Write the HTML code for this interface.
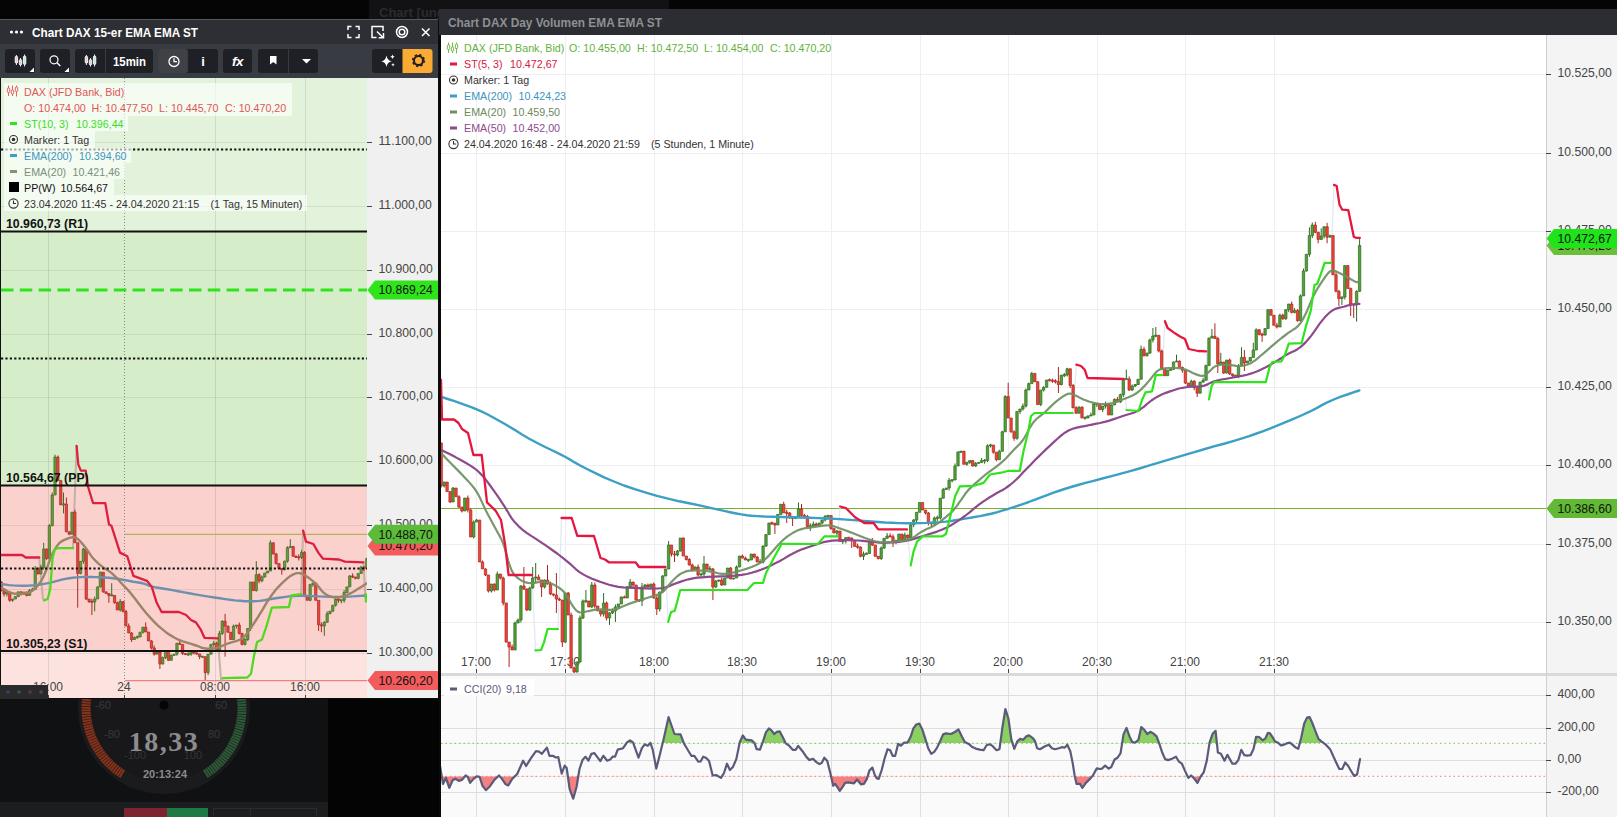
<!DOCTYPE html><html><head><meta charset="utf-8"><title>Chart</title><style>html,body{margin:0;padding:0;background:#050506;}body{width:1617px;height:817px;overflow:hidden;position:relative;font-family:"Liberation Sans",sans-serif;}svg{position:absolute;left:0;top:0;display:block}text{font-family:"Liberation Sans",sans-serif;}</style></head><body>
<svg width="1617" height="817" viewBox="0 0 1617 817">
<rect x="0" y="0" width="1617" height="817" fill="#050506" />
<rect x="369" y="0" width="300" height="19" fill="#121214" />
<text x="379" y="17" font-size="13" fill="#2b2b2e" font-weight="bold" text-anchor="start" >Chart [ung</text>
<rect x="439" y="9" width="1178" height="26" fill="#2b2d32" />
<text x="448" y="27" font-size="13" fill="#8d9094" font-weight="bold" text-anchor="start" textLength="214" lengthAdjust="spacingAndGlyphs">Chart DAX Day Volumen EMA EMA ST</text>
<rect x="439" y="35" width="2.5" height="782" fill="#0a0a0b" />
<rect x="441" y="35" width="1105" height="638" fill="#ffffff" />
<rect x="1546" y="35" width="71" height="782" fill="#f4f4f4" />
<rect x="441" y="676" width="1105" height="141" fill="#fafafa" />
<g shape-rendering="crispEdges">
<line x1="476.5" y1="35" x2="476.5" y2="673" stroke="#efeff1" stroke-width="1" />
<line x1="565.5" y1="35" x2="565.5" y2="673" stroke="#efeff1" stroke-width="1" />
<line x1="654.5" y1="35" x2="654.5" y2="673" stroke="#efeff1" stroke-width="1" />
<line x1="742.5" y1="35" x2="742.5" y2="673" stroke="#efeff1" stroke-width="1" />
<line x1="831.5" y1="35" x2="831.5" y2="673" stroke="#efeff1" stroke-width="1" />
<line x1="920.5" y1="35" x2="920.5" y2="673" stroke="#efeff1" stroke-width="1" />
<line x1="1008.5" y1="35" x2="1008.5" y2="673" stroke="#efeff1" stroke-width="1" />
<line x1="1097.5" y1="35" x2="1097.5" y2="673" stroke="#efeff1" stroke-width="1" />
<line x1="1185.5" y1="35" x2="1185.5" y2="673" stroke="#efeff1" stroke-width="1" />
<line x1="1274.5" y1="35" x2="1274.5" y2="673" stroke="#efeff1" stroke-width="1" />
<line x1="441" y1="74.5" x2="1546" y2="74.5" stroke="#efeff1" stroke-width="1" />
<line x1="441" y1="153.5" x2="1546" y2="153.5" stroke="#efeff1" stroke-width="1" />
<line x1="441" y1="231.5" x2="1546" y2="231.5" stroke="#efeff1" stroke-width="1" />
<line x1="441" y1="309.5" x2="1546" y2="309.5" stroke="#efeff1" stroke-width="1" />
<line x1="441" y1="387.5" x2="1546" y2="387.5" stroke="#efeff1" stroke-width="1" />
<line x1="441" y1="465.5" x2="1546" y2="465.5" stroke="#efeff1" stroke-width="1" />
<line x1="441" y1="544.5" x2="1546" y2="544.5" stroke="#efeff1" stroke-width="1" />
<line x1="441" y1="622.5" x2="1546" y2="622.5" stroke="#efeff1" stroke-width="1" />
<line x1="476.5" y1="676" x2="476.5" y2="817" stroke="#dedee0" stroke-width="1" />
<line x1="565.5" y1="676" x2="565.5" y2="817" stroke="#dedee0" stroke-width="1" />
<line x1="654.5" y1="676" x2="654.5" y2="817" stroke="#dedee0" stroke-width="1" />
<line x1="742.5" y1="676" x2="742.5" y2="817" stroke="#dedee0" stroke-width="1" />
<line x1="831.5" y1="676" x2="831.5" y2="817" stroke="#dedee0" stroke-width="1" />
<line x1="920.5" y1="676" x2="920.5" y2="817" stroke="#dedee0" stroke-width="1" />
<line x1="1008.5" y1="676" x2="1008.5" y2="817" stroke="#dedee0" stroke-width="1" />
<line x1="1097.5" y1="676" x2="1097.5" y2="817" stroke="#dedee0" stroke-width="1" />
<line x1="1185.5" y1="676" x2="1185.5" y2="817" stroke="#dedee0" stroke-width="1" />
<line x1="1274.5" y1="676" x2="1274.5" y2="817" stroke="#dedee0" stroke-width="1" />
<line x1="441" y1="695.5" x2="1546" y2="695.5" stroke="#dedee0" stroke-width="1" />
<line x1="441" y1="728.5" x2="1546" y2="728.5" stroke="#dedee0" stroke-width="1" />
<line x1="441" y1="760.5" x2="1546" y2="760.5" stroke="#dedee0" stroke-width="1" />
<line x1="441" y1="792.5" x2="1546" y2="792.5" stroke="#dedee0" stroke-width="1" />
<rect x="441" y="673" width="1176" height="3" fill="#d9d9db" />
<line x1="1546.5" y1="35" x2="1546.5" y2="817" stroke="#cfcfd1" stroke-width="1" />
</g>
<line x1="1546" y1="74.5" x2="1551" y2="74.5" stroke="#444" stroke-width="1" />
<text x="1557.5" y="77.3" font-size="12.2" fill="#444" font-weight="normal" text-anchor="start" >10.525,00</text>
<line x1="1546" y1="153.5" x2="1551" y2="153.5" stroke="#444" stroke-width="1" />
<text x="1557.5" y="156.3" font-size="12.2" fill="#444" font-weight="normal" text-anchor="start" >10.500,00</text>
<line x1="1546" y1="231.5" x2="1551" y2="231.5" stroke="#444" stroke-width="1" />
<text x="1557.5" y="234.3" font-size="12.2" fill="#444" font-weight="normal" text-anchor="start" >10.475,00</text>
<line x1="1546" y1="309.5" x2="1551" y2="309.5" stroke="#444" stroke-width="1" />
<text x="1557.5" y="312.3" font-size="12.2" fill="#444" font-weight="normal" text-anchor="start" >10.450,00</text>
<line x1="1546" y1="387.5" x2="1551" y2="387.5" stroke="#444" stroke-width="1" />
<text x="1557.5" y="390.3" font-size="12.2" fill="#444" font-weight="normal" text-anchor="start" >10.425,00</text>
<line x1="1546" y1="465.5" x2="1551" y2="465.5" stroke="#444" stroke-width="1" />
<text x="1557.5" y="468.3" font-size="12.2" fill="#444" font-weight="normal" text-anchor="start" >10.400,00</text>
<line x1="1546" y1="544.5" x2="1551" y2="544.5" stroke="#444" stroke-width="1" />
<text x="1557.5" y="547.3" font-size="12.2" fill="#444" font-weight="normal" text-anchor="start" >10.375,00</text>
<line x1="1546" y1="622.5" x2="1551" y2="622.5" stroke="#444" stroke-width="1" />
<text x="1557.5" y="625.3" font-size="12.2" fill="#444" font-weight="normal" text-anchor="start" >10.350,00</text>
<line x1="1546" y1="695.5" x2="1551" y2="695.5" stroke="#444" stroke-width="1" />
<text x="1557.5" y="698.3" font-size="12.2" fill="#444" font-weight="normal" text-anchor="start" >400,00</text>
<line x1="1546" y1="728.5" x2="1551" y2="728.5" stroke="#444" stroke-width="1" />
<text x="1557.5" y="731.3" font-size="12.2" fill="#444" font-weight="normal" text-anchor="start" >200,00</text>
<line x1="1546" y1="760.5" x2="1551" y2="760.5" stroke="#444" stroke-width="1" />
<text x="1557.5" y="763.3" font-size="12.2" fill="#444" font-weight="normal" text-anchor="start" >0,00</text>
<line x1="1546" y1="792.5" x2="1551" y2="792.5" stroke="#444" stroke-width="1" />
<text x="1557.5" y="795.3" font-size="12.2" fill="#444" font-weight="normal" text-anchor="start" >-200,00</text>
<text x="476" y="666" font-size="12" fill="#444" font-weight="normal" text-anchor="middle" >17:00</text>
<line x1="476.5" y1="669" x2="476.5" y2="673" stroke="#444" stroke-width="1" />
<text x="565" y="666" font-size="12" fill="#444" font-weight="normal" text-anchor="middle" >17:30</text>
<line x1="565.5" y1="669" x2="565.5" y2="673" stroke="#444" stroke-width="1" />
<text x="654" y="666" font-size="12" fill="#444" font-weight="normal" text-anchor="middle" >18:00</text>
<line x1="654.5" y1="669" x2="654.5" y2="673" stroke="#444" stroke-width="1" />
<text x="742" y="666" font-size="12" fill="#444" font-weight="normal" text-anchor="middle" >18:30</text>
<line x1="742.5" y1="669" x2="742.5" y2="673" stroke="#444" stroke-width="1" />
<text x="831" y="666" font-size="12" fill="#444" font-weight="normal" text-anchor="middle" >19:00</text>
<line x1="831.5" y1="669" x2="831.5" y2="673" stroke="#444" stroke-width="1" />
<text x="920" y="666" font-size="12" fill="#444" font-weight="normal" text-anchor="middle" >19:30</text>
<line x1="920.5" y1="669" x2="920.5" y2="673" stroke="#444" stroke-width="1" />
<text x="1008" y="666" font-size="12" fill="#444" font-weight="normal" text-anchor="middle" >20:00</text>
<line x1="1008.5" y1="669" x2="1008.5" y2="673" stroke="#444" stroke-width="1" />
<text x="1097" y="666" font-size="12" fill="#444" font-weight="normal" text-anchor="middle" >20:30</text>
<line x1="1097.5" y1="669" x2="1097.5" y2="673" stroke="#444" stroke-width="1" />
<text x="1185" y="666" font-size="12" fill="#444" font-weight="normal" text-anchor="middle" >21:00</text>
<line x1="1185.5" y1="669" x2="1185.5" y2="673" stroke="#444" stroke-width="1" />
<text x="1274" y="666" font-size="12" fill="#444" font-weight="normal" text-anchor="middle" >21:30</text>
<line x1="1274.5" y1="669" x2="1274.5" y2="673" stroke="#444" stroke-width="1" />
<clipPath id="cm"><rect x="441" y="35" width="1105" height="638"/></clipPath>
<g clip-path="url(#cm)">
<line x1="441" y1="508.5" x2="1546" y2="508.5" stroke="#78b030" stroke-width="1.2" />
<polyline points="532.0,575.0 535.5,650.4" fill="none" stroke="#dfe8f3" stroke-width="1.2" stroke-linejoin="round" stroke-linecap="round" />
<polyline points="558.0,629.0 561.5,518.0" fill="none" stroke="#dfe8f3" stroke-width="1.2" stroke-linejoin="round" stroke-linecap="round" />
<polyline points="665.4,567.0 668.2,622.0" fill="none" stroke="#dfe8f3" stroke-width="1.2" stroke-linejoin="round" stroke-linecap="round" />
<polyline points="837.4,536.4 840.2,506.5" fill="none" stroke="#dfe8f3" stroke-width="1.2" stroke-linejoin="round" stroke-linecap="round" />
<polyline points="907.0,529.4 910.7,565.5" fill="none" stroke="#dfe8f3" stroke-width="1.2" stroke-linejoin="round" stroke-linecap="round" />
<polyline points="1072.7,413.0 1076.4,364.7" fill="none" stroke="#dfe8f3" stroke-width="1.2" stroke-linejoin="round" stroke-linecap="round" />
<polyline points="1123.7,379.0 1126.5,410.0" fill="none" stroke="#dfe8f3" stroke-width="1.2" stroke-linejoin="round" stroke-linecap="round" />
<polyline points="1162.0,375.2 1164.9,321.2" fill="none" stroke="#dfe8f3" stroke-width="1.2" stroke-linejoin="round" stroke-linecap="round" />
<polyline points="1206.2,351.3 1209.0,399.4" fill="none" stroke="#dfe8f3" stroke-width="1.2" stroke-linejoin="round" stroke-linecap="round" />
<polyline points="1331.0,262.8 1334.0,184.9" fill="none" stroke="#dfe8f3" stroke-width="1.2" stroke-linejoin="round" stroke-linecap="round" />
<path d="M444.2 482.0V487.5M453.0 487.0V502.0M464.8 498.0V511.0M473.7 520.5V538.5M476.6 519.0V522.0M491.4 584.0V592.5M497.3 571.5V590.0M515.0 621.5V650.0M518.0 618.5V623.0M520.9 585.0V622.5M529.8 586.5V611.0M532.7 567.0V588.5M535.7 563.0V583.0M544.6 579.5V588.5M565.2 593.0V643.0M577.0 661.5V672.5M580.0 615.5V662.5M582.9 599.5V619.0M585.9 590.0V603.0M591.8 582.0V608.0M603.6 593.0V616.5M609.5 612.0V625.0M612.5 608.5V614.0M615.4 604.5V622.0M618.4 604.0V608.0M621.3 596.5V604.0M627.2 586.0V598.0M630.2 579.0V587.5M642.0 583.0V606.0M645.0 584.0V588.0M650.9 584.0V588.0M659.7 591.5V611.5M662.7 575.0V592.0M665.6 569.0V576.0M668.6 541.0V569.0M677.4 550.0V556.5M680.4 538.0V551.5M695.2 566.5V570.0M701.1 572.5V577.5M704.0 556.0V576.5M709.9 565.9V571.1M715.8 580.0V588.0M718.8 580.0V582.0M724.7 578.0V585.0M727.6 568.0V578.0M733.5 578.0V579.5M736.5 565.5V578.0M739.5 556.0V567.0M748.3 558.9V562.1M751.3 554.0V560.0M760.1 558.9V563.1M763.1 545.5V563.5M766.0 534.1V547.0M769.0 523.0V534.6M777.8 514.0V525.0M780.8 504.3V514.5M795.6 517.0V518.6M798.5 502.5V517.5M810.3 523.2V531.0M813.3 521.5V526.5M819.2 523.0V526.2M822.1 520.0V524.5M825.1 514.9V521.5M828.0 514.9V519.1M836.9 530.0V535.5M842.8 539.1V544.0M845.8 537.2V543.5M863.5 551.5V560.0M866.4 552.6V554.4M869.4 541.4V553.5M881.2 546.5V560.0M884.1 538.3V549.0M887.1 533.0V538.8M896.0 539.6V544.3M898.9 534.0V542.0M904.8 532.5V540.1M910.7 523.7V538.7M913.7 519.0V527.2M916.6 512.3V522.5M919.6 502.5V512.3M934.4 516.5V525.0M937.3 515.5V521.0M940.3 498.2V519.5M943.2 488.0V498.2M946.2 488.0V489.5M949.1 477.9V490.5M952.1 479.6V482.3M955.0 463.5V480.0M958.0 451.2V466.0M960.9 451.1V452.4M966.8 461.9V465.8M969.8 460.6V463.9M975.7 461.9V467.0M978.6 462.4V463.4M981.6 458.1V462.9M984.6 459.0V463.7M987.5 444.3V462.1M990.5 443.8V447.5M999.3 449.8V459.7M1002.3 430.8V451.3M1005.2 395.1V431.8M1017.0 411.4V439.8M1020.0 409.0V414.0M1022.9 403.5V410.5M1025.9 388.5V407.5M1028.8 382.6V390.0M1031.8 371.9V383.6M1040.7 390.0V406.1M1043.6 386.3V391.5M1046.6 380.0V387.3M1061.3 374.8V385.5M1064.3 373.0V377.2M1067.2 367.8V376.5M1079.0 406.2V413.3M1085.0 416.4V419.6M1087.9 415.5V418.0M1090.9 412.5V416.0M1093.8 403.0V415.0M1096.8 403.4V407.1M1102.7 406.0V412.1M1105.6 401.5V408.5M1111.5 404.5V415.0M1114.5 398.4V405.0M1120.4 393.7V403.0M1123.3 379.0V397.2M1126.3 369.7V379.6M1132.2 384.5V391.0M1135.2 384.0V387.0M1138.1 379.3V385.0M1141.1 345.5V379.3M1147.0 353.0V356.3M1149.9 338.5V354.0M1152.9 328.0V342.5M1155.8 327.0V337.3M1167.6 370.2V375.7M1170.6 369.1V370.4M1173.5 361.5V369.8M1176.5 354.6V362.0M1191.3 379.7V387.3M1200.1 381.7V393.2M1203.1 377.8V382.2M1206.0 364.6V380.3M1209.0 337.6V365.6M1211.9 329.0V338.1M1220.8 352.8V364.3M1226.7 360.0V373.5M1235.6 375.1V376.3M1238.5 364.1V378.2M1241.5 347.3V365.6M1247.4 361.0V363.0M1250.3 357.4V361.5M1253.3 342.7V357.9M1256.2 328.3V350.0M1265.1 328.6V335.5M1268.0 309.2V328.6M1279.9 313.7V327.0M1285.8 309.7V319.8M1288.7 304.0V312.2M1294.6 308.1V313.4M1300.5 294.4V321.2M1303.5 268.5V295.9M1306.4 254.3V271.5M1309.4 227.3V256.8M1312.3 222.5V238.1M1321.2 228.4V239.4M1324.1 226.7V238.5M1330.1 234.6V237.2M1341.9 296.5V305.0M1344.8 265.6V299.5M1356.6 290.3V321.6M1359.6 238.3V291.8" stroke="#2e6b20" stroke-width="1" fill="none"/>
<path d="M441.2 442.5V487.5M447.1 482.0V491.6M450.1 491.6V503.0M456.0 488.0V496.7M458.9 495.2V508.0M461.9 507.0V512.5M467.8 495.5V512.5M470.7 508.5V537.0M479.6 520.0V562.0M482.5 560.5V568.9M485.5 568.4V576.0M488.4 575.0V592.5M494.4 583.5V591.5M500.3 574.0V579.5M503.2 576.5V605.5M506.2 603.0V642.5M509.1 642.0V667.0M512.1 644.5V650.0M523.9 567.0V590.0M526.8 588.5V611.0M538.6 574.5V580.0M541.6 580.0V597.0M547.5 565.0V584.5M550.5 581.5V595.0M553.4 593.5V596.5M556.4 573.0V613.0M559.3 597.5V601.0M562.3 600.0V647.0M568.2 592.0V615.0M571.1 612.5V668.0M574.1 666.5V673.5M588.9 601.0V607.0M594.8 582.5V608.5M597.7 606.0V611.0M600.7 608.5V616.5M606.6 601.5V620.5M624.3 595.5V598.0M633.1 582.0V587.5M636.1 585.0V601.0M639.1 599.0V602.0M647.9 583.5V587.5M653.8 582.5V598.5M656.8 595.5V615.0M671.5 545.0V556.5M674.5 551.0V562.0M683.3 537.5V556.0M686.3 556.0V560.5M689.3 558.0V565.5M692.2 563.5V571.5M698.1 564.5V576.5M707.0 564.0V570.0M712.9 568.0V600.0M721.7 577.5V586.0M730.6 567.0V579.0M742.4 554.5V558.1M745.4 556.6V560.0M754.2 554.0V558.5M757.2 556.0V562.0M771.9 521.6V524.9M774.9 522.5V534.0M783.7 501.8V513.2M786.7 509.8V523.0M789.7 512.0V518.9M792.6 516.4V526.0M801.5 504.0V518.0M804.4 513.9V516.6M807.4 514.9V527.1M816.2 522.5V526.2M831.0 515.5V529.9M833.9 528.4V533.0M839.9 531.0V541.4M848.7 537.2V538.5M851.7 537.5V548.0M854.6 540.0V546.4M857.6 543.6V548.8M860.5 546.5V557.3M872.3 538.0V546.0M875.3 545.0V556.8M878.2 556.3V559.5M890.1 533.3V537.0M893.0 534.3V547.0M901.9 534.0V540.6M907.8 535.0V540.2M922.5 502.5V510.0M925.5 510.0V514.5M928.4 512.0V525.5M931.4 523.0V527.5M963.9 450.8V464.3M972.7 460.1V466.5M993.4 445.0V453.7M996.4 452.2V461.2M1008.2 382.7V418.0M1011.1 418.0V432.8M1014.1 430.3V440.8M1034.8 373.4V381.7M1037.7 381.2V404.6M1049.5 378.6V381.3M1052.5 378.6V382.8M1055.4 379.2V383.5M1058.4 367.0V393.0M1070.2 368.8V388.0M1073.1 384.0V408.2M1076.1 406.2V413.3M1082.0 406.2V418.0M1099.7 403.5V409.6M1108.6 403.5V415.0M1117.4 396.9V402.0M1129.2 376.5V391.0M1144.0 346.8V356.3M1158.8 334.9V352.5M1161.7 349.5V369.8M1164.7 367.8V375.7M1179.5 360.5V367.5M1182.4 366.5V372.7M1185.4 369.7V384.0M1188.3 383.0V387.3M1194.2 380.2V390.2M1197.2 387.2V397.0M1214.9 323.4V338.5M1217.8 337.0V373.0M1223.7 362.0V374.0M1229.7 358.5V375.0M1232.6 373.5V377.2M1244.4 350.0V371.0M1259.2 329.3V335.4M1262.1 332.6V341.8M1271.0 309.2V315.2M1273.9 315.2V325.3M1276.9 322.8V328.5M1282.8 313.7V319.8M1291.7 301.5V313.4M1297.6 309.1V321.7M1315.3 221.8V233.3M1318.2 231.8V243.3M1327.1 222.9V243.3M1333.0 235.6V274.8M1336.0 272.3V292.3M1338.9 289.8V306.0M1347.8 265.1V288.5M1350.7 287.5V316.0M1353.7 304.0V318.0" stroke="#ac261e" stroke-width="1" fill="none"/>
<path d="M443.0 482.0h2.4V486.0h-2.4zM451.8 488.0h2.4V502.0h-2.4zM463.6 498.0h2.4V511.0h-2.4zM472.5 522.0h2.4V537.0h-2.4zM475.4 520.0h2.4V522.0h-2.4zM490.2 584.0h2.4V591.0h-2.4zM496.1 574.0h2.4V590.0h-2.4zM513.8 623.0h2.4V650.0h-2.4zM516.8 620.0h2.4V623.0h-2.4zM519.7 586.0h2.4V620.0h-2.4zM528.6 588.0h2.4V610.0h-2.4zM531.5 578.0h2.4V588.0h-2.4zM534.5 577.0h2.4V578.0h-2.4zM543.4 580.0h2.4V587.0h-2.4zM564.0 593.0h2.4V642.0h-2.4zM575.8 662.0h2.4V672.0h-2.4zM578.8 618.0h2.4V662.0h-2.4zM581.7 601.0h2.4V618.0h-2.4zM584.7 600.4h2.4V601.6h-2.4zM590.6 585.0h2.4V607.0h-2.4zM602.4 603.0h2.4V614.0h-2.4zM608.3 613.0h2.4V618.0h-2.4zM611.3 611.0h2.4V613.0h-2.4zM614.2 607.0h2.4V611.0h-2.4zM617.2 604.0h2.4V607.0h-2.4zM620.1 597.0h2.4V604.0h-2.4zM626.0 587.0h2.4V598.0h-2.4zM629.0 582.0h2.4V587.0h-2.4zM640.8 587.0h2.4V601.0h-2.4zM643.8 585.0h2.4V587.0h-2.4zM649.7 584.0h2.4V587.0h-2.4zM658.5 592.0h2.4V609.0h-2.4zM661.5 576.0h2.4V592.0h-2.4zM664.4 569.0h2.4V576.0h-2.4zM667.4 545.0h2.4V569.0h-2.4zM676.2 551.0h2.4V555.0h-2.4zM679.2 538.0h2.4V551.0h-2.4zM694.0 567.0h2.4V570.0h-2.4zM699.9 574.0h2.4V575.0h-2.4zM702.8 564.0h2.4V574.0h-2.4zM708.7 568.4h2.4V569.6h-2.4zM714.6 581.0h2.4V587.0h-2.4zM717.6 580.0h2.4V581.0h-2.4zM723.5 578.0h2.4V585.0h-2.4zM726.4 568.0h2.4V578.0h-2.4zM732.3 578.0h2.4V579.0h-2.4zM735.3 567.0h2.4V578.0h-2.4zM738.3 556.0h2.4V567.0h-2.4zM747.1 559.4h2.4V560.6h-2.4zM750.1 554.0h2.4V560.0h-2.4zM758.9 561.4h2.4V562.6h-2.4zM761.9 546.0h2.4V562.0h-2.4zM764.8 534.6h2.4V546.0h-2.4zM767.8 523.0h2.4V534.6h-2.4zM776.6 514.5h2.4V525.0h-2.4zM779.6 504.3h2.4V514.5h-2.4zM794.4 517.0h2.4V518.6h-2.4zM797.3 509.0h2.4V517.0h-2.4zM809.1 525.7h2.4V526.9h-2.4zM812.1 524.0h2.4V526.0h-2.4zM818.0 523.0h2.4V525.7h-2.4zM820.9 520.0h2.4V523.0h-2.4zM823.9 516.4h2.4V520.0h-2.4zM826.8 515.4h2.4V516.6h-2.4zM835.7 531.0h2.4V533.0h-2.4zM841.6 540.6h2.4V541.8h-2.4zM844.6 537.7h2.4V541.0h-2.4zM862.3 554.0h2.4V556.3h-2.4zM865.2 553.1h2.4V554.4h-2.4zM868.2 541.4h2.4V553.5h-2.4zM880.0 548.0h2.4V558.5h-2.4zM882.9 538.3h2.4V548.0h-2.4zM885.9 536.0h2.4V538.3h-2.4zM894.8 540.6h2.4V541.8h-2.4zM897.7 534.0h2.4V541.0h-2.4zM903.6 535.0h2.4V539.6h-2.4zM909.5 524.7h2.4V537.7h-2.4zM912.5 520.0h2.4V524.7h-2.4zM915.4 512.3h2.4V520.0h-2.4zM918.4 502.5h2.4V512.3h-2.4zM933.2 518.0h2.4V524.0h-2.4zM936.1 517.4h2.4V518.6h-2.4zM939.1 498.2h2.4V518.0h-2.4zM942.0 489.5h2.4V498.2h-2.4zM945.0 488.0h2.4V489.5h-2.4zM947.9 480.4h2.4V488.0h-2.4zM950.9 479.6h2.4V480.8h-2.4zM953.8 466.0h2.4V480.0h-2.4zM956.8 452.2h2.4V466.0h-2.4zM959.7 451.1h2.4V452.4h-2.4zM965.6 462.4h2.4V464.3h-2.4zM968.6 460.6h2.4V462.4h-2.4zM974.5 463.4h2.4V466.0h-2.4zM977.4 462.4h2.4V463.4h-2.4zM980.4 460.6h2.4V462.4h-2.4zM983.4 460.0h2.4V461.2h-2.4zM986.3 445.8h2.4V460.6h-2.4zM989.3 444.8h2.4V446.0h-2.4zM998.1 451.3h2.4V459.7h-2.4zM1001.1 431.8h2.4V451.3h-2.4zM1004.0 396.6h2.4V431.8h-2.4zM1015.8 411.4h2.4V438.3h-2.4zM1018.8 409.0h2.4V411.4h-2.4zM1021.7 406.0h2.4V409.0h-2.4zM1024.7 390.0h2.4V406.0h-2.4zM1027.6 383.6h2.4V390.0h-2.4zM1030.6 373.4h2.4V383.6h-2.4zM1039.5 390.0h2.4V404.6h-2.4zM1042.4 387.3h2.4V390.0h-2.4zM1045.4 380.0h2.4V387.3h-2.4zM1060.1 375.3h2.4V384.5h-2.4zM1063.1 374.5h2.4V375.8h-2.4zM1066.0 368.8h2.4V375.0h-2.4zM1077.8 407.2h2.4V413.3h-2.4zM1083.8 417.4h2.4V418.6h-2.4zM1086.7 416.0h2.4V418.0h-2.4zM1089.7 415.0h2.4V416.0h-2.4zM1092.6 404.0h2.4V415.0h-2.4zM1095.6 403.4h2.4V404.6h-2.4zM1101.5 406.0h2.4V409.6h-2.4zM1104.4 404.0h2.4V406.0h-2.4zM1110.3 405.0h2.4V415.0h-2.4zM1113.3 399.4h2.4V405.0h-2.4zM1119.2 394.7h2.4V402.0h-2.4zM1122.1 379.0h2.4V394.7h-2.4zM1125.1 378.4h2.4V379.6h-2.4zM1131.0 386.0h2.4V390.0h-2.4zM1134.0 384.5h2.4V386.0h-2.4zM1136.9 379.3h2.4V384.5h-2.4zM1139.9 349.3h2.4V379.3h-2.4zM1145.8 353.0h2.4V355.8h-2.4zM1148.7 340.0h2.4V353.0h-2.4zM1151.7 336.0h2.4V340.0h-2.4zM1154.6 335.1h2.4V336.3h-2.4zM1166.4 370.2h2.4V375.7h-2.4zM1169.4 369.1h2.4V370.4h-2.4zM1172.3 362.0h2.4V369.3h-2.4zM1175.3 361.0h2.4V362.0h-2.4zM1190.1 381.2h2.4V385.8h-2.4zM1198.9 382.2h2.4V393.2h-2.4zM1201.9 380.3h2.4V382.2h-2.4zM1204.8 365.6h2.4V380.3h-2.4zM1207.8 338.1h2.4V365.6h-2.4zM1210.7 336.3h2.4V338.1h-2.4zM1219.6 362.0h2.4V363.8h-2.4zM1225.5 360.0h2.4V373.0h-2.4zM1234.4 375.1h2.4V376.3h-2.4zM1237.3 365.6h2.4V375.7h-2.4zM1240.3 357.4h2.4V365.6h-2.4zM1246.2 361.0h2.4V363.0h-2.4zM1249.1 357.4h2.4V361.0h-2.4zM1252.1 350.0h2.4V357.4h-2.4zM1255.0 329.8h2.4V350.0h-2.4zM1263.9 328.6h2.4V335.0h-2.4zM1266.8 309.7h2.4V328.6h-2.4zM1278.7 315.2h2.4V327.0h-2.4zM1284.6 309.7h2.4V318.8h-2.4zM1287.5 304.0h2.4V309.7h-2.4zM1293.4 310.6h2.4V312.4h-2.4zM1299.3 295.9h2.4V320.7h-2.4zM1302.3 271.0h2.4V295.9h-2.4zM1305.2 254.3h2.4V271.0h-2.4zM1308.2 235.6h2.4V254.3h-2.4zM1311.1 225.0h2.4V235.6h-2.4zM1320.0 236.0h2.4V239.4h-2.4zM1322.9 226.7h2.4V236.0h-2.4zM1328.9 235.6h2.4V237.2h-2.4zM1340.7 297.0h2.4V298.6h-2.4zM1343.6 265.6h2.4V297.0h-2.4zM1355.4 291.3h2.4V305.0h-2.4zM1358.4 245.5h2.4V291.3h-2.4z" fill="#55a038" stroke="#2e6b20" stroke-width="0.7"/>
<path d="M440.0 443.0h2.4V486.0h-2.4zM445.9 482.0h2.4V491.6h-2.4zM448.9 491.6h2.4V502.0h-2.4zM454.8 488.0h2.4V496.7h-2.4zM457.7 496.7h2.4V507.0h-2.4zM460.7 507.0h2.4V511.0h-2.4zM466.6 498.0h2.4V510.0h-2.4zM469.5 510.0h2.4V537.0h-2.4zM478.4 520.0h2.4V562.0h-2.4zM481.3 562.0h2.4V568.9h-2.4zM484.3 568.9h2.4V575.0h-2.4zM487.2 575.0h2.4V591.0h-2.4zM493.2 584.0h2.4V590.0h-2.4zM499.1 574.0h2.4V578.0h-2.4zM502.0 578.0h2.4V603.0h-2.4zM505.0 603.0h2.4V642.0h-2.4zM507.9 642.0h2.4V647.0h-2.4zM510.9 647.0h2.4V650.0h-2.4zM522.7 586.0h2.4V589.0h-2.4zM525.6 589.0h2.4V610.0h-2.4zM537.4 577.0h2.4V580.0h-2.4zM540.4 580.0h2.4V587.0h-2.4zM546.3 580.0h2.4V584.0h-2.4zM549.3 584.0h2.4V594.0h-2.4zM552.2 594.0h2.4V595.0h-2.4zM555.2 595.0h2.4V599.0h-2.4zM558.1 599.0h2.4V600.0h-2.4zM561.1 600.0h2.4V642.0h-2.4zM567.0 593.0h2.4V615.0h-2.4zM569.9 615.0h2.4V668.0h-2.4zM572.9 668.0h2.4V672.0h-2.4zM587.6 601.0h2.4V607.0h-2.4zM593.6 585.0h2.4V606.0h-2.4zM596.5 606.0h2.4V611.0h-2.4zM599.5 611.0h2.4V614.0h-2.4zM605.4 603.0h2.4V618.0h-2.4zM623.1 597.0h2.4V598.0h-2.4zM631.9 582.0h2.4V585.0h-2.4zM634.9 585.0h2.4V600.0h-2.4zM637.9 600.0h2.4V601.0h-2.4zM646.7 585.0h2.4V587.0h-2.4zM652.6 584.0h2.4V598.0h-2.4zM655.6 598.0h2.4V609.0h-2.4zM670.3 545.0h2.4V554.0h-2.4zM673.3 554.0h2.4V555.0h-2.4zM682.1 538.0h2.4V556.0h-2.4zM685.1 556.0h2.4V559.5h-2.4zM688.1 559.5h2.4V565.0h-2.4zM691.0 565.0h2.4V570.0h-2.4zM696.9 567.0h2.4V575.0h-2.4zM705.8 564.0h2.4V569.0h-2.4zM711.7 569.0h2.4V587.0h-2.4zM720.5 580.0h2.4V585.0h-2.4zM729.4 568.0h2.4V579.0h-2.4zM741.2 556.0h2.4V558.1h-2.4zM744.2 558.1h2.4V560.0h-2.4zM753.0 554.0h2.4V557.0h-2.4zM756.0 557.0h2.4V562.0h-2.4zM770.7 522.6h2.4V523.9h-2.4zM773.7 523.5h2.4V525.0h-2.4zM782.5 504.3h2.4V512.7h-2.4zM785.5 512.2h2.4V513.5h-2.4zM788.5 513.0h2.4V516.4h-2.4zM791.4 516.4h2.4V518.6h-2.4zM800.3 509.0h2.4V515.5h-2.4zM803.2 515.4h2.4V516.6h-2.4zM806.2 516.4h2.4V526.6h-2.4zM815.0 524.0h2.4V525.7h-2.4zM829.8 515.5h2.4V528.4h-2.4zM832.7 528.4h2.4V533.0h-2.4zM838.7 531.0h2.4V541.4h-2.4zM847.5 537.2h2.4V538.5h-2.4zM850.5 538.0h2.4V540.5h-2.4zM853.4 540.5h2.4V546.4h-2.4zM856.4 546.1h2.4V547.3h-2.4zM859.3 547.0h2.4V556.3h-2.4zM871.1 541.4h2.4V545.0h-2.4zM874.1 545.0h2.4V556.3h-2.4zM877.0 556.3h2.4V558.5h-2.4zM888.9 535.8h2.4V537.0h-2.4zM891.8 536.8h2.4V541.4h-2.4zM900.7 534.0h2.4V539.6h-2.4zM906.6 535.0h2.4V537.7h-2.4zM921.3 502.5h2.4V510.0h-2.4zM924.3 510.0h2.4V513.0h-2.4zM927.2 513.0h2.4V523.0h-2.4zM930.2 523.0h2.4V524.0h-2.4zM962.7 451.3h2.4V464.3h-2.4zM971.5 460.6h2.4V466.0h-2.4zM992.2 445.0h2.4V452.2h-2.4zM995.2 452.2h2.4V459.7h-2.4zM1007.0 396.6h2.4V418.0h-2.4zM1009.9 418.0h2.4V431.8h-2.4zM1012.9 431.8h2.4V438.3h-2.4zM1033.6 373.4h2.4V381.7h-2.4zM1036.5 381.7h2.4V404.6h-2.4zM1048.3 379.6h2.4V380.8h-2.4zM1051.3 380.1h2.4V381.3h-2.4zM1054.2 380.8h2.4V382.0h-2.4zM1057.2 381.7h2.4V384.5h-2.4zM1069.0 368.8h2.4V385.5h-2.4zM1071.9 385.5h2.4V407.7h-2.4zM1074.9 407.7h2.4V413.3h-2.4zM1080.8 407.2h2.4V418.0h-2.4zM1098.5 404.0h2.4V409.6h-2.4zM1107.4 404.0h2.4V415.0h-2.4zM1116.2 399.4h2.4V402.0h-2.4zM1128.0 379.0h2.4V390.0h-2.4zM1142.8 349.3h2.4V355.8h-2.4zM1157.6 335.4h2.4V351.0h-2.4zM1160.5 351.0h2.4V369.3h-2.4zM1163.5 369.3h2.4V375.7h-2.4zM1178.2 361.0h2.4V367.5h-2.4zM1181.2 367.5h2.4V370.2h-2.4zM1184.2 370.2h2.4V383.0h-2.4zM1187.1 383.0h2.4V385.8h-2.4zM1193.0 381.2h2.4V387.7h-2.4zM1196.0 387.7h2.4V393.2h-2.4zM1213.7 336.3h2.4V338.5h-2.4zM1216.6 338.5h2.4V363.8h-2.4zM1222.5 362.0h2.4V373.0h-2.4zM1228.5 360.0h2.4V374.0h-2.4zM1231.4 374.0h2.4V375.7h-2.4zM1243.2 357.4h2.4V363.0h-2.4zM1258.0 329.8h2.4V334.4h-2.4zM1260.9 334.1h2.4V335.3h-2.4zM1269.8 309.7h2.4V315.2h-2.4zM1272.7 315.2h2.4V325.3h-2.4zM1275.7 325.3h2.4V327.0h-2.4zM1281.6 315.2h2.4V318.8h-2.4zM1290.5 304.0h2.4V312.4h-2.4zM1296.4 310.6h2.4V320.7h-2.4zM1314.1 225.0h2.4V232.3h-2.4zM1317.0 232.3h2.4V239.4h-2.4zM1325.9 226.7h2.4V237.2h-2.4zM1331.8 235.6h2.4V274.8h-2.4zM1334.8 274.8h2.4V291.3h-2.4zM1337.7 291.3h2.4V298.6h-2.4zM1346.6 265.6h2.4V288.5h-2.4zM1349.5 288.5h2.4V304.0h-2.4zM1352.5 304.0h2.4V305.0h-2.4z" fill="#ea463a" stroke="#ac261e" stroke-width="0.7"/>
<polyline points="441.0,396.7 443.2,397.5 447.8,399.0 454.5,401.2 463.5,404.3 471.9,407.4 479.6,410.7 486.8,414.0 493.2,417.5 500.0,421.2 507.0,425.3 514.2,429.6 521.6,434.3 529.2,438.7 536.8,442.8 544.6,446.7 552.5,450.5 559.4,453.9 565.5,457.0 570.6,459.9 574.7,462.4 580.2,465.5 586.9,469.0 594.9,472.9 604.1,477.4 613.9,481.5 624.0,485.5 634.7,489.2 645.9,492.6 657.0,495.8 668.1,498.7 679.2,501.3 690.3,503.5 700.7,505.7 710.4,507.8 719.4,509.8 727.6,511.7 735.0,513.2 741.4,514.4 746.9,515.2 751.6,515.7 757.4,516.1 764.3,516.5 772.4,516.7 781.8,517.0 791.0,517.2 800.3,517.5 809.6,517.8 818.9,518.1 827.6,518.5 835.7,518.9 843.2,519.4 850.2,519.9 857.1,520.4 864.1,520.9 871.0,521.5 878.0,522.0 884.9,522.5 891.9,522.8 898.9,523.1 905.8,523.2 912.8,523.2 919.7,523.1 926.7,522.9 933.6,522.5 940.0,522.1 945.8,521.6 951.0,521.0 955.6,520.2 960.9,519.4 966.7,518.4 973.1,517.3 980.0,516.1 986.4,514.8 992.2,513.5 997.4,512.1 1002.1,510.7 1006.7,509.3 1011.3,507.8 1016.0,506.3 1020.6,504.8 1024.9,503.3 1028.8,502.0 1032.2,500.7 1035.3,499.6 1039.0,498.2 1043.1,496.6 1047.7,494.9 1052.9,492.9 1058.5,491.0 1064.5,489.0 1071.0,487.0 1078.0,485.0 1085.5,482.9 1093.6,480.8 1102.3,478.5 1111.6,476.2 1120.9,473.7 1130.1,471.2 1139.4,468.5 1148.7,465.7 1158.0,462.9 1167.2,460.1 1176.5,457.3 1185.8,454.6 1195.3,451.8 1204.9,449.0 1214.8,446.2 1224.9,443.5 1234.0,440.9 1242.1,438.4 1249.2,436.2 1255.2,434.0 1262.6,431.4 1271.1,428.1 1280.8,424.2 1291.7,419.7 1301.3,415.5 1309.6,411.7 1316.6,408.1 1322.4,404.9 1328.5,401.8 1334.9,399.0 1341.7,396.4 1348.8,394.0 1354.1,392.2 1357.6,391.0 1359.4,390.4" fill="none" stroke="#3c9fc4" stroke-width="2.4" stroke-linejoin="round" stroke-linecap="round" />
<polyline points="441.0,449.6 442.4,450.4 445.3,451.9 449.6,454.1 455.4,457.1 460.7,460.0 465.6,462.8 470.0,465.4 474.0,468.0 478.0,471.2 481.9,475.1 485.9,479.8 489.8,485.0 493.4,490.1 496.8,494.9 499.9,499.4 502.6,503.6 505.1,507.4 507.2,510.8 508.9,513.8 510.3,516.2 512.0,518.8 514.1,521.4 516.6,524.1 519.3,526.9 522.7,529.8 526.6,532.8 531.2,535.9 536.3,539.1 541.5,542.6 546.8,546.2 552.2,550.0 557.8,554.0 562.8,557.9 567.4,561.6 571.6,565.2 575.4,568.8 579.2,571.8 583.2,574.4 587.3,576.6 591.4,578.4 595.7,580.1 600.1,581.7 604.6,583.2 609.1,584.8 613.8,585.9 618.4,586.8 623.1,587.4 627.9,587.6 633.2,587.9 639.0,588.1 645.3,588.4 652.2,588.6 658.1,588.5 663.0,588.0 666.8,587.1 669.6,585.9 672.7,584.6 676.2,583.3 680.1,581.9 684.2,580.5 688.5,579.3 692.9,578.4 697.4,577.7 702.1,577.3 707.5,576.9 713.7,576.6 720.6,576.3 728.4,576.1 735.4,575.6 741.5,574.9 747.0,574.0 751.6,572.8 756.3,571.4 760.9,569.8 765.5,567.9 770.1,565.9 774.7,563.6 779.4,561.2 784.0,558.6 788.7,555.8 793.4,553.3 798.0,551.1 802.6,549.1 807.3,547.5 811.7,546.0 815.8,544.6 819.8,543.3 823.4,542.2 827.6,541.3 832.3,540.7 837.4,540.3 842.9,540.2 848.3,540.2 853.4,540.3 858.3,540.5 863.0,540.9 867.4,541.3 871.6,541.7 875.5,542.1 879.2,542.6 883.3,542.8 888.0,542.7 893.1,542.4 898.6,541.9 904.0,541.1 909.1,540.1 913.9,538.9 918.6,537.4 923.2,536.0 927.8,534.5 932.4,533.1 937.1,531.6 941.7,529.8 946.3,527.7 951.0,525.2 955.6,522.4 960.3,519.3 964.9,516.0 969.6,512.3 974.2,508.4 978.9,504.7 983.5,501.4 988.1,498.3 992.8,495.5 996.4,493.3 999.2,491.8 1000.9,490.8 1001.8,490.5 1003.1,489.7 1004.9,488.6 1007.2,487.0 1010.0,485.0 1013.0,482.5 1016.3,479.5 1019.8,476.1 1023.4,472.1 1027.2,468.2 1030.9,464.4 1034.6,460.6 1038.3,456.9 1042.0,453.2 1045.7,449.6 1049.5,446.1 1053.2,442.6 1056.6,439.5 1059.9,436.7 1062.9,434.2 1065.7,432.2 1069.0,430.3 1072.7,428.8 1076.8,427.6 1081.5,426.7 1086.1,425.8 1090.7,424.8 1095.4,423.9 1100.0,423.0 1104.7,421.9 1109.3,420.6 1113.9,419.1 1118.6,417.5 1122.8,416.0 1126.8,414.7 1130.4,413.7 1133.6,412.8 1137.0,411.3 1140.5,409.2 1144.1,406.6 1147.8,403.3 1151.4,400.5 1155.0,398.1 1158.4,396.2 1161.7,394.6 1165.3,393.1 1169.3,391.6 1173.6,390.2 1178.1,388.8 1182.7,387.8 1187.3,387.0 1191.9,386.7 1196.5,386.7 1200.6,386.3 1204.3,385.6 1207.5,384.4 1210.3,382.9 1213.5,381.6 1217.2,380.5 1221.3,379.5 1225.9,378.8 1230.4,378.0 1234.7,377.2 1239.0,376.4 1243.1,375.6 1247.0,374.7 1250.7,373.6 1254.1,372.5 1257.4,371.2 1260.7,369.7 1264.1,368.1 1267.7,366.2 1271.3,364.1 1274.8,362.1 1278.0,360.2 1281.0,358.3 1283.7,356.4 1286.5,354.8 1289.3,353.3 1292.0,351.9 1294.8,350.8 1297.5,349.2 1300.3,347.2 1303.0,344.9 1305.8,342.1 1308.5,339.0 1311.3,335.6 1314.0,331.9 1316.8,327.8 1319.5,323.9 1322.3,320.4 1325.0,317.1 1327.8,314.2 1330.5,311.8 1333.3,309.9 1336.0,308.6 1338.8,307.9 1341.3,307.3 1343.6,306.7 1345.7,306.1 1347.5,305.5 1349.5,305.1 1351.5,304.7 1353.7,304.4 1356.0,304.1 1357.7,304.0 1358.8,303.9 1359.4,303.8" fill="none" stroke="#8e4a8c" stroke-width="2.2" stroke-linejoin="round" stroke-linecap="round" />
<polyline points="441.0,453.0 441.6,453.7 442.9,455.0 444.8,456.9 447.2,459.6 449.9,462.3 452.8,465.3 455.9,468.4 459.1,471.6 462.4,475.0 465.6,478.4 468.9,481.9 472.1,485.6 475.0,489.3 477.6,493.3 479.8,497.4 481.7,501.6 483.8,506.1 486.1,510.9 488.7,515.9 491.5,521.1 494.1,526.0 496.6,530.5 498.8,534.6 500.9,538.4 502.9,542.8 504.7,547.9 506.4,553.8 508.1,560.2 509.8,565.7 511.5,570.1 513.3,573.4 515.2,575.6 517.3,577.6 519.6,579.4 522.1,580.9 524.9,582.1 527.9,582.9 531.1,583.1 534.6,582.9 538.4,582.1 541.9,581.8 545.1,581.9 548.1,582.5 550.9,583.5 553.5,584.6 556.1,586.0 558.5,587.4 560.8,589.0 562.9,590.8 564.8,592.9 566.4,595.2 567.9,597.8 569.4,600.4 571.0,603.1 572.7,605.8 574.6,608.6 576.4,610.6 578.2,611.9 580.1,612.5 581.9,612.3 584.1,612.0 586.7,611.5 589.6,610.9 592.8,610.1 596.3,609.7 600.0,609.5 604.0,609.6 608.1,609.9 612.0,609.9 615.4,609.4 618.6,608.4 621.3,607.1 624.4,605.7 627.6,604.4 631.1,603.1 634.8,601.9 638.4,600.7 641.9,599.6 645.3,598.5 648.5,597.5 651.5,596.6 654.3,595.7 656.9,594.9 659.1,594.1 661.5,592.8 663.8,590.9 666.1,588.5 668.5,585.5 670.8,582.8 673.1,580.2 675.4,578.0 677.6,576.0 679.9,574.3 682.2,572.9 684.6,571.9 686.9,571.1 689.9,570.6 693.4,570.4 697.4,570.4 702.1,570.6 706.5,571.0 710.7,571.6 714.6,572.4 718.4,573.3 722.2,573.8 726.1,573.8 730.0,573.3 734.0,572.4 738.2,571.3 742.5,570.0 747.0,568.6 751.6,567.0 755.7,565.3 759.2,563.6 762.1,561.8 764.3,560.0 766.6,557.9 768.9,555.6 771.2,553.0 773.6,550.2 775.9,547.5 778.2,545.0 780.5,542.5 782.9,540.2 785.4,538.0 788.2,535.9 791.3,533.9 794.5,531.9 797.9,530.3 801.4,529.1 804.9,528.2 808.7,527.8 812.4,527.2 816.1,526.7 819.8,526.1 823.4,525.6 826.9,525.4 830.2,525.5 833.2,526.1 836.0,527.0 839.0,528.1 842.3,529.2 845.8,530.5 849.4,531.9 853.2,533.3 856.9,534.8 860.6,536.2 864.4,537.8 867.9,539.0 871.1,540.1 874.1,541.0 876.9,541.7 880.0,542.1 883.4,542.3 887.3,542.2 891.4,541.9 895.4,541.5 899.1,541.1 902.6,540.7 905.8,540.3 909.0,539.4 912.0,538.1 914.9,536.5 917.6,534.4 920.5,532.4 923.5,530.7 926.7,529.1 929.9,527.8 932.9,526.3 935.7,524.7 938.2,523.0 940.6,521.3 942.9,519.4 945.2,517.6 947.5,515.7 949.9,513.7 952.2,511.4 954.5,508.9 956.9,505.9 959.1,502.7 961.2,499.8 963.0,497.2 964.6,494.9 965.8,492.9 968.0,490.4 971.0,487.4 974.8,483.8 979.4,479.8 983.8,476.0 988.0,472.7 991.9,469.8 995.7,467.2 999.2,464.4 1002.7,461.4 1006.1,458.2 1009.3,454.7 1012.3,451.5 1015.1,448.6 1017.7,446.0 1020.0,443.7 1022.3,440.8 1024.7,437.3 1027.0,433.2 1029.3,428.6 1031.8,424.6 1034.3,421.2 1037.0,418.5 1039.7,416.4 1042.5,414.2 1045.3,411.7 1048.1,409.1 1050.8,406.4 1053.7,403.7 1056.7,401.1 1059.9,398.7 1063.1,396.4 1065.9,394.7 1068.2,393.8 1070.1,393.5 1071.5,393.8 1073.2,394.5 1075.3,395.4 1077.8,396.6 1080.5,398.1 1083.4,399.4 1086.4,400.6 1089.6,401.7 1092.8,402.6 1096.1,403.3 1099.3,403.8 1102.6,404.0 1105.8,404.0 1109.2,403.6 1112.7,403.0 1116.2,401.9 1119.9,400.5 1123.4,399.2 1126.7,397.9 1129.7,396.7 1132.5,395.5 1135.3,394.0 1138.1,392.0 1140.9,389.6 1143.6,386.9 1146.3,384.0 1148.8,381.1 1151.2,378.2 1153.6,375.1 1155.6,372.7 1157.5,370.9 1159.1,369.8 1160.5,369.2 1162.5,368.8 1165.0,368.4 1168.2,368.2 1171.9,368.0 1175.3,368.0 1178.3,368.2 1181.0,368.5 1183.3,369.0 1185.5,369.6 1187.6,370.4 1189.6,371.3 1191.4,372.3 1193.4,373.3 1195.5,374.1 1197.7,374.9 1200.0,375.6 1202.0,375.8 1203.9,375.6 1205.5,374.9 1206.9,373.7 1208.4,372.4 1210.0,370.9 1211.7,369.3 1213.6,367.4 1215.7,366.1 1218.2,365.2 1221.1,364.7 1224.2,364.7 1227.3,364.8 1230.3,365.0 1233.1,365.4 1235.9,365.8 1238.6,366.0 1241.4,365.9 1244.1,365.5 1246.9,364.8 1249.6,363.7 1252.4,362.2 1255.1,360.4 1257.9,358.1 1260.9,355.5 1264.1,352.8 1267.6,349.8 1271.2,346.6 1274.8,343.6 1278.3,340.7 1281.6,338.0 1284.9,335.5 1287.9,333.2 1290.6,331.3 1293.2,329.6 1295.5,328.3 1297.6,326.4 1299.7,324.1 1301.6,321.4 1303.5,318.1 1305.3,314.6 1307.1,310.7 1308.9,306.4 1310.8,301.9 1312.7,297.5 1314.8,293.4 1316.9,289.5 1319.2,285.8 1321.5,282.4 1323.7,279.2 1325.8,276.2 1327.9,273.4 1329.8,271.5 1331.7,270.5 1333.4,270.3 1335.0,271.0 1336.8,271.8 1338.7,272.7 1340.9,273.7 1343.1,274.9 1345.3,276.0 1347.4,277.2 1349.4,278.3 1351.2,279.5 1352.9,280.4 1354.4,281.2 1355.7,281.8 1356.8,282.1 1357.8,282.2 1358.5,282.1 1359.1,281.7 1359.4,281.0 1359.7,280.5 1359.9,280.2 1360.0,280.0" fill="none" stroke="#6f8f62" stroke-width="2.2" stroke-linejoin="round" stroke-linecap="round" opacity="0.92"/>
<polyline points="535.5,650.4 541.0,650.0 544.0,642.4 547.6,629.0 558.0,629.0" fill="none" stroke="#2fe41b" stroke-width="2.2" stroke-linejoin="round" stroke-linecap="round" />
<polyline points="668.2,622.0 671.0,612.0 674.7,611.0 680.3,590.0 747.4,590.0 754.0,583.0 763.0,583.0 766.0,573.0 774.3,557.0 781.7,543.8 818.0,544.0 824.4,536.4 837.4,536.4" fill="none" stroke="#2fe41b" stroke-width="2.2" stroke-linejoin="round" stroke-linecap="round" />
<polyline points="910.7,565.5 913.5,551.6 917.2,541.4 922.7,536.4 942.2,536.4 946.0,534.0 949.6,519.2 955.2,496.0 959.9,486.3 973.8,485.8 983.6,482.9 990.0,474.5 1001.2,472.7 1008.6,470.8 1019.8,470.8 1023.5,451.3 1028.0,432.8 1031.0,416.0 1034.6,413.0 1072.7,413.0" fill="none" stroke="#2fe41b" stroke-width="2.2" stroke-linejoin="round" stroke-linecap="round" />
<polyline points="1126.5,410.0 1138.5,411.0 1142.0,400.0 1145.6,392.3 1152.0,391.3 1155.7,375.2 1162.0,375.2" fill="none" stroke="#2fe41b" stroke-width="2.2" stroke-linejoin="round" stroke-linecap="round" />
<polyline points="1209.0,399.4 1211.7,385.8 1214.4,382.2 1265.8,382.2 1269.5,367.5 1272.3,362.0 1281.4,361.4 1285.0,354.6 1288.8,343.6 1301.6,343.2 1306.2,325.3 1310.8,310.6 1314.5,284.9 1317.2,284.0 1320.9,273.9 1324.6,262.8 1331.0,262.8" fill="none" stroke="#2fe41b" stroke-width="2.2" stroke-linejoin="round" stroke-linecap="round" />
<polyline points="441.0,380.0 442.0,419.5 454.0,419.5 458.5,423.0 462.0,429.0 468.0,433.0 473.4,455.0 481.7,455.0 487.0,502.4 495.7,510.8 501.0,520.0 505.0,544.0 508.6,575.0 532.0,575.0" fill="none" stroke="#e5173f" stroke-width="2.3" stroke-linejoin="round" stroke-linecap="round" />
<polyline points="561.5,518.0 571.7,518.0 577.3,535.8 594.0,536.0 600.5,558.0 605.0,559.5 608.8,562.3 635.7,562.3 639.0,567.0 665.4,567.0" fill="none" stroke="#e5173f" stroke-width="2.3" stroke-linejoin="round" stroke-linecap="round" />
<polyline points="840.2,506.5 845.8,508.0 855.0,517.3 864.3,523.0 873.6,523.0 878.2,529.4 907.0,529.4" fill="none" stroke="#e5173f" stroke-width="2.3" stroke-linejoin="round" stroke-linecap="round" />
<polyline points="1076.4,364.7 1081.0,366.0 1084.7,369.7 1087.5,378.0 1123.7,379.0" fill="none" stroke="#e5173f" stroke-width="2.3" stroke-linejoin="round" stroke-linecap="round" />
<polyline points="1164.9,321.2 1167.6,328.0 1174.0,332.6 1179.6,336.3 1185.0,339.0 1188.7,349.0 1198.0,351.0 1206.2,351.3" fill="none" stroke="#e5173f" stroke-width="2.3" stroke-linejoin="round" stroke-linecap="round" />
<polyline points="1334.0,184.9 1336.7,186.0 1339.5,204.7 1342.3,209.7 1348.3,210.2 1353.8,236.7 1356.0,237.8 1359.9,237.8" fill="none" stroke="#e5173f" stroke-width="2.3" stroke-linejoin="round" stroke-linecap="round" />
</g>
<g stroke="#62b13c" fill="none" stroke-width="0.9"><path d="M448.5 42.5v2.500m0 4.500v3.500M452.5 42.5v4.500m0 4v2M456.5 42.5v1.500m0 4.500v5"/><rect x="447.3" y="45" width="2.400" height="4.500" rx="0.8"/><rect x="451.3" y="47" width="2.400" height="4" rx="0.8"/><rect x="455.3" y="44" width="2.400" height="4.500" rx="0.8"/></g>
<text x="464" y="52.3" font-size="10.7" fill="#62b13c" font-weight="normal" text-anchor="start" >DAX (JFD Bank, Bid)</text>
<text x="569" y="52.3" font-size="10.7" fill="#62b13c" font-weight="normal" text-anchor="start" >O: 10.455,00</text>
<text x="637" y="52.3" font-size="10.7" fill="#62b13c" font-weight="normal" text-anchor="start" >H: 10.472,50</text>
<text x="704" y="52.3" font-size="10.7" fill="#62b13c" font-weight="normal" text-anchor="start" >L: 10.454,00</text>
<text x="770" y="52.3" font-size="10.7" fill="#62b13c" font-weight="normal" text-anchor="start" >C: 10.470,20</text>
<rect x="450" y="62.5" width="7" height="3" fill="#e5173f" />
<text x="464" y="68.3" font-size="10.7" fill="#d81540" font-weight="normal" text-anchor="start" >ST(5, 3)</text>
<text x="510" y="68.3" font-size="10.7" fill="#d81540" font-weight="normal" text-anchor="start" >10.472,67</text>
<circle cx="453.5" cy="80" r="4" fill="none" stroke="#333" stroke-width="1.1"/><circle cx="453.5" cy="80" r="1.8" fill="#333"/>
<text x="464" y="84.3" font-size="10.7" fill="#333" font-weight="normal" text-anchor="start" >Marker: 1 Tag</text>
<rect x="450" y="94.5" width="7" height="3" fill="#3c9fc4" />
<text x="464" y="100.3" font-size="10.7" fill="#3c95bd" font-weight="normal" text-anchor="start" >EMA(200)</text>
<text x="518.5" y="100.3" font-size="10.7" fill="#3c95bd" font-weight="normal" text-anchor="start" >10.424,23</text>
<rect x="450" y="110.5" width="7" height="3" fill="#6f8f62" />
<text x="464" y="116.3" font-size="10.7" fill="#6a8a5c" font-weight="normal" text-anchor="start" >EMA(20)</text>
<text x="512.5" y="116.3" font-size="10.7" fill="#6a8a5c" font-weight="normal" text-anchor="start" >10.459,50</text>
<rect x="450" y="126.5" width="7" height="3" fill="#8e4a8c" />
<text x="464" y="132.3" font-size="10.7" fill="#8e4a8c" font-weight="normal" text-anchor="start" >EMA(50)</text>
<text x="512.5" y="132.3" font-size="10.7" fill="#8e4a8c" font-weight="normal" text-anchor="start" >10.452,00</text>
<circle cx="453.5" cy="144" r="4.6" fill="none" stroke="#333" stroke-width="1.1"/><path d="M453.5 141V144H456.0" fill="none" stroke="#333" stroke-width="1.1"/>
<text x="464" y="148.3" font-size="10.7" fill="#333" font-weight="normal" text-anchor="start" >24.04.2020 16:48 - 24.04.2020 21:59</text>
<text x="651" y="148.3" font-size="10.7" fill="#333" font-weight="normal" text-anchor="start" >(5 Stunden, 1 Minute)</text>
<path d="M1546.5 245.5L1554 236.0H1617V255.0H1554Z" fill="#6bbf3b"/>
<text x="1557.5" y="249.8" font-size="12.2" fill="#111" font-weight="normal" text-anchor="start" >10.470,20</text>
<path d="M1546.5 238.5L1554 229.0H1617V248.0H1554Z" fill="#1fe41a"/>
<text x="1557.5" y="242.8" font-size="12.2" fill="#111" font-weight="normal" text-anchor="start" >10.472,67</text>
<path d="M1546.5 508.5L1554 499.0H1617V518.0H1554Z" fill="#62b934"/>
<text x="1557.5" y="512.8" font-size="12.2" fill="#111" font-weight="normal" text-anchor="start" >10.386,60</text>
<clipPath id="cc"><rect x="441" y="676" width="1105" height="141"/></clipPath>
<g clip-path="url(#cc)">
<clipPath id="chi"><rect x="441" y="676" width="1105" height="67.29999999999995"/></clipPath>
<clipPath id="clo"><rect x="441" y="776.3" width="1105" height="40.700000000000045"/></clipPath>
<polygon points="440.0,743.3 440.0,766.0 443.0,783.9 445.9,777.9 449.3,787.8 452.9,779.9 455.8,778.9 458.8,780.9 461.8,779.9 465.7,775.5 467.7,776.9 470.1,782.9 473.6,778.9 476.6,776.3 479.6,776.9 482.5,785.8 485.9,790.2 489.5,786.8 494.4,779.9 499.0,775.5 501.3,777.9 505.3,783.9 508.3,785.4 512.2,778.9 517.2,774.0 523.1,760.7 526.1,766.0 531.0,758.1 536.0,751.2 539.0,751.6 541.9,753.8 546.9,747.6 549.4,755.8 552.8,755.8 555.8,757.5 558.3,757.1 561.7,773.6 564.7,765.6 566.7,768.0 569.6,788.8 573.2,798.7 576.6,786.8 579.5,769.0 582.5,760.1 585.5,756.7 588.4,760.7 591.4,753.8 594.4,753.2 600.3,761.1 603.3,755.8 607.2,760.7 610.2,759.5 612.6,756.7 615.1,756.7 617.7,749.6 623.1,748.2 627.0,742.3 630.0,740.3 633.0,742.3 638.5,757.7 641.9,748.2 644.8,744.3 647.8,745.9 650.4,742.9 652.7,749.6 656.3,768.6 659.7,755.2 663.6,739.3 668.6,717.0 671.5,725.5 674.5,734.0 680.5,734.4 684.4,744.3 687.4,749.2 691.3,755.8 694.3,755.8 698.3,761.7 700.6,761.5 703.2,756.7 706.2,758.1 709.1,761.1 712.7,775.5 716.1,775.0 721.0,777.9 724.0,773.0 727.0,763.7 729.9,770.0 732.9,767.0 736.3,759.1 739.8,742.3 742.8,735.4 745.8,739.7 751.7,740.3 754.7,743.3 756.6,749.2 760.0,749.6 763.0,741.3 765.9,732.4 768.9,728.4 771.5,730.4 774.2,734.0 776.8,731.8 779.8,731.4 782.8,737.3 785.7,743.3 788.7,745.3 792.7,749.8 795.6,749.8 798.2,745.9 802.5,751.2 806.5,757.1 809.5,760.1 813.0,758.7 816.4,762.1 819.4,764.1 821.7,763.1 824.3,757.7 827.3,761.1 830.3,773.0 833.2,785.8 835.2,783.9 837.2,786.8 839.8,790.8 842.7,786.8 845.1,782.9 848.1,782.3 851.0,782.9 854.0,783.3 857.0,779.5 860.9,784.3 863.9,783.9 866.9,778.9 869.4,770.6 872.4,767.6 874.8,775.0 876.8,778.5 878.7,778.9 881.7,770.0 884.7,758.1 887.6,749.2 890.2,750.2 892.6,755.8 895.2,755.8 898.1,743.9 900.9,745.7 903.9,742.7 907.4,742.7 910.4,737.3 913.4,728.4 916.3,724.5 919.3,723.5 922.3,729.4 925.2,738.3 928.2,748.2 931.2,753.8 934.2,751.8 937.1,747.6 940.1,741.3 943.1,734.4 946.0,733.4 951.0,734.0 954.9,732.0 958.5,729.4 961.9,736.4 964.8,741.9 968.8,743.9 971.8,746.8 975.7,748.6 979.7,749.6 983.6,750.2 986.6,745.3 989.6,744.3 992.5,745.9 996.5,750.2 999.5,749.2 1002.4,727.5 1005.4,709.0 1008.4,718.5 1011.3,739.3 1014.3,748.8 1017.3,741.3 1020.2,738.9 1023.2,739.7 1026.2,736.4 1029.1,735.4 1033.1,738.3 1035.1,741.3 1037.1,748.2 1040.0,749.2 1045.0,746.3 1048.9,744.7 1051.9,748.2 1054.9,749.2 1058.8,748.2 1061.8,747.2 1064.8,747.6 1067.3,744.7 1070.3,751.2 1072.7,763.1 1074.7,775.9 1076.6,783.9 1080.0,783.9 1082.4,787.8 1085.9,782.9 1089.9,778.9 1092.9,775.5 1096.8,768.4 1099.8,769.0 1102.2,768.6 1105.1,765.6 1108.7,768.6 1111.3,767.0 1114.6,759.5 1117.6,757.7 1120.6,753.2 1123.5,734.4 1126.5,727.9 1129.5,736.4 1132.4,742.3 1135.4,742.3 1138.4,739.9 1141.3,727.1 1144.3,729.8 1147.3,734.0 1150.3,731.8 1153.2,733.4 1156.6,736.4 1159.2,743.3 1162.1,752.2 1165.1,759.1 1168.1,760.1 1172.0,758.7 1176.0,756.7 1179.0,761.7 1181.9,763.7 1184.9,770.6 1188.3,777.9 1191.2,775.5 1194.2,778.5 1197.4,782.9 1200.7,776.5 1203.7,772.4 1206.7,761.1 1209.6,742.3 1212.6,733.8 1215.6,730.8 1217.9,752.6 1220.9,753.8 1224.5,760.7 1227.4,754.8 1229.8,759.1 1232.4,763.7 1235.4,763.7 1238.3,760.1 1241.3,749.8 1244.3,755.2 1247.2,755.6 1250.6,755.2 1253.6,748.8 1256.1,736.8 1259.1,737.0 1262.7,740.3 1265.4,738.3 1268.0,732.8 1270.0,733.4 1273.0,737.9 1274.9,741.3 1277.9,742.7 1280.9,745.3 1283.8,744.9 1286.8,743.3 1289.8,742.7 1292.7,744.9 1295.7,747.6 1298.3,748.8 1301.3,737.3 1304.2,723.5 1307.0,717.6 1309.6,717.0 1312.5,723.5 1315.5,731.4 1318.5,738.9 1321.4,741.3 1325.4,744.3 1330.3,749.6 1333.3,756.2 1336.3,762.7 1339.3,769.0 1342.2,769.0 1345.2,762.5 1348.2,766.0 1351.1,771.0 1354.1,775.9 1357.1,774.4 1360.0,759.1 1360.0,743.3" fill="#8ccf63" clip-path="url(#chi)"/>
<polygon points="440.0,776.3 440.0,766.0 443.0,783.9 445.9,777.9 449.3,787.8 452.9,779.9 455.8,778.9 458.8,780.9 461.8,779.9 465.7,775.5 467.7,776.9 470.1,782.9 473.6,778.9 476.6,776.3 479.6,776.9 482.5,785.8 485.9,790.2 489.5,786.8 494.4,779.9 499.0,775.5 501.3,777.9 505.3,783.9 508.3,785.4 512.2,778.9 517.2,774.0 523.1,760.7 526.1,766.0 531.0,758.1 536.0,751.2 539.0,751.6 541.9,753.8 546.9,747.6 549.4,755.8 552.8,755.8 555.8,757.5 558.3,757.1 561.7,773.6 564.7,765.6 566.7,768.0 569.6,788.8 573.2,798.7 576.6,786.8 579.5,769.0 582.5,760.1 585.5,756.7 588.4,760.7 591.4,753.8 594.4,753.2 600.3,761.1 603.3,755.8 607.2,760.7 610.2,759.5 612.6,756.7 615.1,756.7 617.7,749.6 623.1,748.2 627.0,742.3 630.0,740.3 633.0,742.3 638.5,757.7 641.9,748.2 644.8,744.3 647.8,745.9 650.4,742.9 652.7,749.6 656.3,768.6 659.7,755.2 663.6,739.3 668.6,717.0 671.5,725.5 674.5,734.0 680.5,734.4 684.4,744.3 687.4,749.2 691.3,755.8 694.3,755.8 698.3,761.7 700.6,761.5 703.2,756.7 706.2,758.1 709.1,761.1 712.7,775.5 716.1,775.0 721.0,777.9 724.0,773.0 727.0,763.7 729.9,770.0 732.9,767.0 736.3,759.1 739.8,742.3 742.8,735.4 745.8,739.7 751.7,740.3 754.7,743.3 756.6,749.2 760.0,749.6 763.0,741.3 765.9,732.4 768.9,728.4 771.5,730.4 774.2,734.0 776.8,731.8 779.8,731.4 782.8,737.3 785.7,743.3 788.7,745.3 792.7,749.8 795.6,749.8 798.2,745.9 802.5,751.2 806.5,757.1 809.5,760.1 813.0,758.7 816.4,762.1 819.4,764.1 821.7,763.1 824.3,757.7 827.3,761.1 830.3,773.0 833.2,785.8 835.2,783.9 837.2,786.8 839.8,790.8 842.7,786.8 845.1,782.9 848.1,782.3 851.0,782.9 854.0,783.3 857.0,779.5 860.9,784.3 863.9,783.9 866.9,778.9 869.4,770.6 872.4,767.6 874.8,775.0 876.8,778.5 878.7,778.9 881.7,770.0 884.7,758.1 887.6,749.2 890.2,750.2 892.6,755.8 895.2,755.8 898.1,743.9 900.9,745.7 903.9,742.7 907.4,742.7 910.4,737.3 913.4,728.4 916.3,724.5 919.3,723.5 922.3,729.4 925.2,738.3 928.2,748.2 931.2,753.8 934.2,751.8 937.1,747.6 940.1,741.3 943.1,734.4 946.0,733.4 951.0,734.0 954.9,732.0 958.5,729.4 961.9,736.4 964.8,741.9 968.8,743.9 971.8,746.8 975.7,748.6 979.7,749.6 983.6,750.2 986.6,745.3 989.6,744.3 992.5,745.9 996.5,750.2 999.5,749.2 1002.4,727.5 1005.4,709.0 1008.4,718.5 1011.3,739.3 1014.3,748.8 1017.3,741.3 1020.2,738.9 1023.2,739.7 1026.2,736.4 1029.1,735.4 1033.1,738.3 1035.1,741.3 1037.1,748.2 1040.0,749.2 1045.0,746.3 1048.9,744.7 1051.9,748.2 1054.9,749.2 1058.8,748.2 1061.8,747.2 1064.8,747.6 1067.3,744.7 1070.3,751.2 1072.7,763.1 1074.7,775.9 1076.6,783.9 1080.0,783.9 1082.4,787.8 1085.9,782.9 1089.9,778.9 1092.9,775.5 1096.8,768.4 1099.8,769.0 1102.2,768.6 1105.1,765.6 1108.7,768.6 1111.3,767.0 1114.6,759.5 1117.6,757.7 1120.6,753.2 1123.5,734.4 1126.5,727.9 1129.5,736.4 1132.4,742.3 1135.4,742.3 1138.4,739.9 1141.3,727.1 1144.3,729.8 1147.3,734.0 1150.3,731.8 1153.2,733.4 1156.6,736.4 1159.2,743.3 1162.1,752.2 1165.1,759.1 1168.1,760.1 1172.0,758.7 1176.0,756.7 1179.0,761.7 1181.9,763.7 1184.9,770.6 1188.3,777.9 1191.2,775.5 1194.2,778.5 1197.4,782.9 1200.7,776.5 1203.7,772.4 1206.7,761.1 1209.6,742.3 1212.6,733.8 1215.6,730.8 1217.9,752.6 1220.9,753.8 1224.5,760.7 1227.4,754.8 1229.8,759.1 1232.4,763.7 1235.4,763.7 1238.3,760.1 1241.3,749.8 1244.3,755.2 1247.2,755.6 1250.6,755.2 1253.6,748.8 1256.1,736.8 1259.1,737.0 1262.7,740.3 1265.4,738.3 1268.0,732.8 1270.0,733.4 1273.0,737.9 1274.9,741.3 1277.9,742.7 1280.9,745.3 1283.8,744.9 1286.8,743.3 1289.8,742.7 1292.7,744.9 1295.7,747.6 1298.3,748.8 1301.3,737.3 1304.2,723.5 1307.0,717.6 1309.6,717.0 1312.5,723.5 1315.5,731.4 1318.5,738.9 1321.4,741.3 1325.4,744.3 1330.3,749.6 1333.3,756.2 1336.3,762.7 1339.3,769.0 1342.2,769.0 1345.2,762.5 1348.2,766.0 1351.1,771.0 1354.1,775.9 1357.1,774.4 1360.0,759.1 1360.0,776.3" fill="#f58080" clip-path="url(#clo)"/>
<line x1="441" y1="743.3" x2="1546" y2="743.3" stroke="#7fbf5a" stroke-width="1" stroke-dasharray="1.5 3"/>
<line x1="441" y1="776.3" x2="1546" y2="776.3" stroke="#ee7f7f" stroke-width="1" stroke-dasharray="1.5 3"/>
<polyline points="440.0,766.0 443.0,783.9 445.9,777.9 449.3,787.8 452.9,779.9 455.8,778.9 458.8,780.9 461.8,779.9 465.7,775.5 467.7,776.9 470.1,782.9 473.6,778.9 476.6,776.3 479.6,776.9 482.5,785.8 485.9,790.2 489.5,786.8 494.4,779.9 499.0,775.5 501.3,777.9 505.3,783.9 508.3,785.4 512.2,778.9 517.2,774.0 523.1,760.7 526.1,766.0 531.0,758.1 536.0,751.2 539.0,751.6 541.9,753.8 546.9,747.6 549.4,755.8 552.8,755.8 555.8,757.5 558.3,757.1 561.7,773.6 564.7,765.6 566.7,768.0 569.6,788.8 573.2,798.7 576.6,786.8 579.5,769.0 582.5,760.1 585.5,756.7 588.4,760.7 591.4,753.8 594.4,753.2 600.3,761.1 603.3,755.8 607.2,760.7 610.2,759.5 612.6,756.7 615.1,756.7 617.7,749.6 623.1,748.2 627.0,742.3 630.0,740.3 633.0,742.3 638.5,757.7 641.9,748.2 644.8,744.3 647.8,745.9 650.4,742.9 652.7,749.6 656.3,768.6 659.7,755.2 663.6,739.3 668.6,717.0 671.5,725.5 674.5,734.0 680.5,734.4 684.4,744.3 687.4,749.2 691.3,755.8 694.3,755.8 698.3,761.7 700.6,761.5 703.2,756.7 706.2,758.1 709.1,761.1 712.7,775.5 716.1,775.0 721.0,777.9 724.0,773.0 727.0,763.7 729.9,770.0 732.9,767.0 736.3,759.1 739.8,742.3 742.8,735.4 745.8,739.7 751.7,740.3 754.7,743.3 756.6,749.2 760.0,749.6 763.0,741.3 765.9,732.4 768.9,728.4 771.5,730.4 774.2,734.0 776.8,731.8 779.8,731.4 782.8,737.3 785.7,743.3 788.7,745.3 792.7,749.8 795.6,749.8 798.2,745.9 802.5,751.2 806.5,757.1 809.5,760.1 813.0,758.7 816.4,762.1 819.4,764.1 821.7,763.1 824.3,757.7 827.3,761.1 830.3,773.0 833.2,785.8 835.2,783.9 837.2,786.8 839.8,790.8 842.7,786.8 845.1,782.9 848.1,782.3 851.0,782.9 854.0,783.3 857.0,779.5 860.9,784.3 863.9,783.9 866.9,778.9 869.4,770.6 872.4,767.6 874.8,775.0 876.8,778.5 878.7,778.9 881.7,770.0 884.7,758.1 887.6,749.2 890.2,750.2 892.6,755.8 895.2,755.8 898.1,743.9 900.9,745.7 903.9,742.7 907.4,742.7 910.4,737.3 913.4,728.4 916.3,724.5 919.3,723.5 922.3,729.4 925.2,738.3 928.2,748.2 931.2,753.8 934.2,751.8 937.1,747.6 940.1,741.3 943.1,734.4 946.0,733.4 951.0,734.0 954.9,732.0 958.5,729.4 961.9,736.4 964.8,741.9 968.8,743.9 971.8,746.8 975.7,748.6 979.7,749.6 983.6,750.2 986.6,745.3 989.6,744.3 992.5,745.9 996.5,750.2 999.5,749.2 1002.4,727.5 1005.4,709.0 1008.4,718.5 1011.3,739.3 1014.3,748.8 1017.3,741.3 1020.2,738.9 1023.2,739.7 1026.2,736.4 1029.1,735.4 1033.1,738.3 1035.1,741.3 1037.1,748.2 1040.0,749.2 1045.0,746.3 1048.9,744.7 1051.9,748.2 1054.9,749.2 1058.8,748.2 1061.8,747.2 1064.8,747.6 1067.3,744.7 1070.3,751.2 1072.7,763.1 1074.7,775.9 1076.6,783.9 1080.0,783.9 1082.4,787.8 1085.9,782.9 1089.9,778.9 1092.9,775.5 1096.8,768.4 1099.8,769.0 1102.2,768.6 1105.1,765.6 1108.7,768.6 1111.3,767.0 1114.6,759.5 1117.6,757.7 1120.6,753.2 1123.5,734.4 1126.5,727.9 1129.5,736.4 1132.4,742.3 1135.4,742.3 1138.4,739.9 1141.3,727.1 1144.3,729.8 1147.3,734.0 1150.3,731.8 1153.2,733.4 1156.6,736.4 1159.2,743.3 1162.1,752.2 1165.1,759.1 1168.1,760.1 1172.0,758.7 1176.0,756.7 1179.0,761.7 1181.9,763.7 1184.9,770.6 1188.3,777.9 1191.2,775.5 1194.2,778.5 1197.4,782.9 1200.7,776.5 1203.7,772.4 1206.7,761.1 1209.6,742.3 1212.6,733.8 1215.6,730.8 1217.9,752.6 1220.9,753.8 1224.5,760.7 1227.4,754.8 1229.8,759.1 1232.4,763.7 1235.4,763.7 1238.3,760.1 1241.3,749.8 1244.3,755.2 1247.2,755.6 1250.6,755.2 1253.6,748.8 1256.1,736.8 1259.1,737.0 1262.7,740.3 1265.4,738.3 1268.0,732.8 1270.0,733.4 1273.0,737.9 1274.9,741.3 1277.9,742.7 1280.9,745.3 1283.8,744.9 1286.8,743.3 1289.8,742.7 1292.7,744.9 1295.7,747.6 1298.3,748.8 1301.3,737.3 1304.2,723.5 1307.0,717.6 1309.6,717.0 1312.5,723.5 1315.5,731.4 1318.5,738.9 1321.4,741.3 1325.4,744.3 1330.3,749.6 1333.3,756.2 1336.3,762.7 1339.3,769.0 1342.2,769.0 1345.2,762.5 1348.2,766.0 1351.1,771.0 1354.1,775.9 1357.1,774.4 1360.0,759.1" fill="none" stroke="#5a5a7a" stroke-width="2.2" stroke-linejoin="round" stroke-linecap="round" />
</g>
<rect x="444" y="679" width="90" height="17" fill="#ffffff" opacity="0.85"/>
<rect x="450" y="687.5" width="7" height="3" fill="#5a5a7a" />
<text x="464" y="693.3" font-size="10.7" fill="#5a5a7a" font-weight="normal" text-anchor="start" >CCI(20)</text>
<text x="506" y="693.3" font-size="10.7" fill="#5a5a7a" font-weight="normal" text-anchor="start" >9,18</text>
<rect x="0" y="698" width="328" height="119" fill="#101113" />
<rect x="328" y="698" width="111" height="119" fill="#040405" />
<clipPath id="cg"><rect x="0" y="698" width="328" height="104"/></clipPath>
<g clip-path="url(#cg)">
<circle cx="164" cy="708" r="86" fill="#1b1b1d"/>
<circle cx="164" cy="708" r="73" fill="#18181a"/>
<path d="M122.7 774.1A78 78 0 0 1 90.7 681.3" stroke="#8a3219" stroke-width="9" fill="none" stroke-dasharray="2 0.6"/>
<path d="M237.3 681.3A78 78 0 0 1 205.3 774.1" stroke="#2d5a37" stroke-width="9" fill="none" stroke-dasharray="2 0.6"/>
<circle cx="164" cy="705" r="4.5" fill="#050505"/>
<text x="103" y="709" font-size="11" fill="#38383b" font-weight="normal" text-anchor="middle" >-60</text>
<text x="221" y="709" font-size="11" fill="#38383b" font-weight="normal" text-anchor="middle" >60</text>
<text x="112" y="738" font-size="11" fill="#38383b" font-weight="normal" text-anchor="middle" >-80</text>
<text x="214" y="738" font-size="11" fill="#38383b" font-weight="normal" text-anchor="middle" >80</text>
<text x="135" y="759" font-size="11" fill="#343437" font-weight="normal" text-anchor="middle" >-100</text>
<text x="193" y="759" font-size="11" fill="#343437" font-weight="normal" text-anchor="middle" >100</text>
<text x="164" y="751" font-size="28" fill="#8c8c8e" text-anchor="middle" font-weight="bold" style="font-family:'Liberation Serif',serif" letter-spacing="1.5">18,33</text>
<text x="165" y="777.5" font-size="11" fill="#8a8a8c" font-weight="bold" text-anchor="middle" >20:13:24</text>
</g>
<rect x="0" y="802" width="328" height="15" fill="#1c1d1f" />
<rect x="124" y="808" width="43" height="9" fill="#7e2331" />
<rect x="167" y="808" width="41" height="9" fill="#1e7a44" />
<rect x="213.5" y="808.5" width="37" height="12" fill="none" stroke="#2c2c2f"/><rect x="250.5" y="808.5" width="66" height="12" fill="none" stroke="#2c2c2f"/>
<rect x="0" y="19" width="439" height="680" fill="#0c0c0d" />
<rect x="0" y="19" width="438" height="1" fill="#55585e" />
<rect x="0" y="20" width="438" height="24" fill="#2d2f35" />
<rect x="0" y="44" width="438" height="34" fill="#393b42" />
<circle cx="11.5" cy="32" r="1.6" fill="#fff"/><circle cx="16.5" cy="32" r="1.6" fill="#fff"/><circle cx="21.5" cy="32" r="1.6" fill="#fff"/>
<text x="32" y="37" font-size="13" fill="#ffffff" font-weight="bold" text-anchor="start" textLength="166" lengthAdjust="spacingAndGlyphs">Chart DAX 15-er EMA EMA ST</text>
<g stroke="#fff" stroke-width="1.5" fill="none">
<path d="M348 30v-3.5h3.5M355.5 26.5h3.5v3.5M359 34v3.5h-3.5M351.5 37.5h-3.5v-3.5"/>
<path d="M376.5 37.500h-4.5v-11h11v4.500M377 31.5l6 6M383.500 33v4.800h-4.800"/>
<circle cx="402" cy="32" r="5.500"/><circle cx="402" cy="32" r="2.800"/>
<path d="M422 28.500l7.500 7.500M429.500 28.500l-7.500 7.500"/>
</g>
<rect x="5" y="49" width="30" height="24" rx="3" fill="#1f2025"/>
<rect x="40" y="49" width="30" height="24" rx="3" fill="#1f2025"/>
<rect x="75" y="49" width="78" height="24" rx="3" fill="#1f2025"/>
<rect x="158" y="49" width="60" height="24" rx="3" fill="#1f2025"/>
<rect x="158" y="49" width="30" height="24" rx="3" fill="#3f4147"/>
<rect x="223" y="49" width="29" height="24" rx="3" fill="#1f2025"/>
<rect x="258" y="49" width="60" height="24" rx="3" fill="#1f2025"/>
<rect x="372" y="49" width="60" height="24" rx="3" fill="#1f2025"/>
<path d="M402.500 49h27a3 3 0 0 1 3 3v18a3 3 0 0 1-3 3h-27z" fill="#fbaa33"/>
<line x1="105.5" y1="49" x2="105.5" y2="73" stroke="#393b42" stroke-width="1" />
<line x1="288.5" y1="49" x2="288.5" y2="73" stroke="#393b42" stroke-width="1" />
<line x1="188" y1="49" x2="188" y2="73" stroke="#2a2b30" stroke-width="0.5" />
<g stroke="#fff" stroke-width="0.9" fill="none"><path d="M16.4 55V65M20.5 58V66.5M24.6 54.5V66.5"/><rect x="15.2" y="56.2" width="2.400" height="7" rx="1.200" fill="#e6c9d6"/><rect x="19.3" y="59.5" width="2.400" height="5.500" rx="1.200" fill="#e6c9d6"/><rect x="23.4" y="56" width="2.400" height="8.500" rx="1.200" fill="#c9e6dc"/></g>
<g stroke="#fff" stroke-width="0.9" fill="none"><path d="M86.4 55V65M90.5 58V66.5M94.6 54.5V66.5"/><rect x="85.2" y="56.2" width="2.400" height="7" rx="1.200" fill="#e6c9d6"/><rect x="89.3" y="59.5" width="2.400" height="5.500" rx="1.200" fill="#e6c9d6"/><rect x="93.4" y="56" width="2.400" height="8.500" rx="1.200" fill="#c9e6dc"/></g>
<path d="M34 67.500v4.500h-4.500z" fill="#fff"/><path d="M69 67.500v4.500h-4.500z" fill="#fff"/>
<circle cx="54" cy="59.800" r="4" stroke="#fff" stroke-width="1.200" fill="none"/><path d="M57 62.800l3.300 3.200" stroke="#fff" stroke-width="1.400"/>
<text x="113" y="65.5" font-size="12.5" fill="#fff" font-weight="bold" text-anchor="start" textLength="33" lengthAdjust="spacingAndGlyphs">15min</text>
<circle cx="174" cy="61.500" r="5" stroke="#fff" stroke-width="1.300" fill="none"/><path d="M174 58.300v3.300h3" stroke="#fff" stroke-width="1.300" fill="none"/>
<text x="203" y="66" font-size="13" fill="#fff" font-weight="bold" text-anchor="middle" >i</text>
<text x="237.500" y="66" font-size="13.500" fill="#fff" font-weight="bold" font-style="italic" text-anchor="middle" letter-spacing="-0.5">fx</text>
<path d="M270 56h6.500v8.500l-3.250-2.500l-3.250 2.500z" fill="#fff"/>
<path d="M302 59h9l-4.500 4.500z" fill="#fff"/>
<path d="M386.500 55.500q0.800 5 5.200 5.800q-4.400 0.800-5.200 5.800q-0.800-5-5.200-5.800q4.400-0.800 5.200-5.800zM392.500 54.500q0.300 2 2.200 2.300q-1.900 0.300-2.200 2.300q-0.300-2-2.200-2.300q1.900-0.300 2.200-2.300zM393 63q0.300 1.600 1.800 1.800q-1.500 0.300-1.800 1.800q-0.300-1.600-1.800-1.800q1.500-0.300 1.800-1.800z" fill="#fff"/>
<circle cx="418.500" cy="60.600" r="4.500" stroke="#1d1d1f" stroke-width="2" fill="none"/><circle cx="418.500" cy="60.600" r="5.800" stroke="#1d1d1f" stroke-width="1.600" fill="none" stroke-dasharray="2.300 2.255"/>
<rect x="0" y="78" width="438" height="620" fill="#f0f0f0" />
<rect x="1" y="78" width="366" height="153.5" fill="#e3f3db" />
<rect x="1" y="231.5" width="366" height="254.0" fill="#d6edca" />
<rect x="1" y="485.5" width="366" height="165.5" fill="#fbd1cd" />
<rect x="1" y="651" width="366" height="47" fill="#fde3e0" />
<rect x="0" y="78" width="1" height="620" fill="#111" />
<g shape-rendering="crispEdges">
<line x1="1" y1="142.5" x2="367" y2="142.5" stroke="#000" stroke-width="1" opacity="0.07"/>
<line x1="1" y1="206.5" x2="367" y2="206.5" stroke="#000" stroke-width="1" opacity="0.07"/>
<line x1="1" y1="270.5" x2="367" y2="270.5" stroke="#000" stroke-width="1" opacity="0.07"/>
<line x1="1" y1="334.5" x2="367" y2="334.5" stroke="#000" stroke-width="1" opacity="0.07"/>
<line x1="1" y1="397.5" x2="367" y2="397.5" stroke="#000" stroke-width="1" opacity="0.07"/>
<line x1="1" y1="461.5" x2="367" y2="461.5" stroke="#000" stroke-width="1" opacity="0.07"/>
<line x1="1" y1="525.5" x2="367" y2="525.5" stroke="#000" stroke-width="1" opacity="0.07"/>
<line x1="1" y1="589.5" x2="367" y2="589.5" stroke="#000" stroke-width="1" opacity="0.07"/>
<line x1="1" y1="653.5" x2="367" y2="653.5" stroke="#000" stroke-width="1" opacity="0.07"/>
<line x1="48.5" y1="78" x2="48.5" y2="698" stroke="#000" stroke-width="1" opacity="0.09"/>
<line x1="215.5" y1="78" x2="215.5" y2="698" stroke="#000" stroke-width="1" opacity="0.09"/>
<line x1="305.5" y1="78" x2="305.5" y2="698" stroke="#000" stroke-width="1" opacity="0.09"/>
</g>
<line x1="124.5" y1="78" x2="124.5" y2="698" stroke="#8a8a8a" stroke-width="1" stroke-dasharray="1 2"/>
<line x1="367" y1="142.5" x2="372" y2="142.5" stroke="#444" stroke-width="1" />
<text x="378.5" y="145.3" font-size="12.2" fill="#444" font-weight="normal" text-anchor="start" >11.100,00</text>
<line x1="367" y1="206.5" x2="372" y2="206.5" stroke="#444" stroke-width="1" />
<text x="378.5" y="209.3" font-size="12.2" fill="#444" font-weight="normal" text-anchor="start" >11.000,00</text>
<line x1="367" y1="270.5" x2="372" y2="270.5" stroke="#444" stroke-width="1" />
<text x="378.5" y="273.3" font-size="12.2" fill="#444" font-weight="normal" text-anchor="start" >10.900,00</text>
<line x1="367" y1="334.5" x2="372" y2="334.5" stroke="#444" stroke-width="1" />
<text x="378.5" y="337.3" font-size="12.2" fill="#444" font-weight="normal" text-anchor="start" >10.800,00</text>
<line x1="367" y1="397.5" x2="372" y2="397.5" stroke="#444" stroke-width="1" />
<text x="378.5" y="400.3" font-size="12.2" fill="#444" font-weight="normal" text-anchor="start" >10.700,00</text>
<line x1="367" y1="461.5" x2="372" y2="461.5" stroke="#444" stroke-width="1" />
<text x="378.5" y="464.3" font-size="12.2" fill="#444" font-weight="normal" text-anchor="start" >10.600,00</text>
<line x1="367" y1="525.5" x2="372" y2="525.5" stroke="#444" stroke-width="1" />
<text x="378.5" y="528.3" font-size="12.2" fill="#444" font-weight="normal" text-anchor="start" >10.500,00</text>
<line x1="367" y1="589.5" x2="372" y2="589.5" stroke="#444" stroke-width="1" />
<text x="378.5" y="592.3" font-size="12.2" fill="#444" font-weight="normal" text-anchor="start" >10.400,00</text>
<line x1="367" y1="653.5" x2="372" y2="653.5" stroke="#444" stroke-width="1" />
<text x="378.5" y="656.3" font-size="12.2" fill="#444" font-weight="normal" text-anchor="start" >10.300,00</text>
<text x="48" y="691" font-size="12" fill="#444" font-weight="normal" text-anchor="middle" >16:00</text>
<line x1="48.5" y1="695" x2="48.5" y2="698" stroke="#444" stroke-width="1" />
<text x="124" y="691" font-size="12" fill="#444" font-weight="normal" text-anchor="middle" >24</text>
<line x1="124.5" y1="695" x2="124.5" y2="698" stroke="#444" stroke-width="1" />
<text x="215" y="691" font-size="12" fill="#444" font-weight="normal" text-anchor="middle" >08:00</text>
<line x1="215.5" y1="695" x2="215.5" y2="698" stroke="#444" stroke-width="1" />
<text x="305" y="691" font-size="12" fill="#444" font-weight="normal" text-anchor="middle" >16:00</text>
<line x1="305.5" y1="695" x2="305.5" y2="698" stroke="#444" stroke-width="1" />
<clipPath id="cl"><rect x="1" y="78" width="366" height="620"/></clipPath>
<g clip-path="url(#cl)">
<line x1="125" y1="534.3" x2="367" y2="534.3" stroke="#a9a93a" stroke-width="1" />
<line x1="125" y1="680.7" x2="367" y2="680.7" stroke="#e86a6a" stroke-width="1" />
<polyline points="39.2,557.5 42.8,598.0 44.0,600.3" fill="none" stroke="#b8a89a" stroke-width="2" stroke-linejoin="round" stroke-linecap="round" opacity="0.8"/>
<polyline points="73.0,548.2 76.6,446.0" fill="none" stroke="#b8a89a" stroke-width="2" stroke-linejoin="round" stroke-linecap="round" opacity="0.8"/>
<polyline points="217.9,638.3 221.1,681.0 222.8,678.2" fill="none" stroke="#b8a89a" stroke-width="2" stroke-linejoin="round" stroke-linecap="round" opacity="0.8"/>
<polyline points="301.1,594.2 303.1,530.6" fill="none" stroke="#b8a89a" stroke-width="2" stroke-linejoin="round" stroke-linecap="round" opacity="0.8"/>
<polyline points="363.4,562.4 365.4,597.9" fill="none" stroke="#b8a89a" stroke-width="2" stroke-linejoin="round" stroke-linecap="round" opacity="0.8"/>
<path d="M6.9 590.5V596.5M12.5 599.0V601.8M15.4 596.5V599.0M18.2 591.8V596.5M23.9 592.0V595.0M29.5 589.0V595.4M32.4 587.8V590.5M35.2 566.0V589.8M40.9 564.8V574.0M43.7 542.8V569.8M49.4 524.2V558.7M52.2 492.5V526.2M55.0 454.7V495.0M63.5 492.6V513.4M72.1 512.2V534.2M80.6 561.3V574.4M83.4 548.0V563.8M94.7 596.5V611.4M97.6 586.4V599.0M100.4 571.7V587.4M111.7 583.2V596.0M120.2 599.1V611.5M134.4 636.5V639.5M137.2 635.6V638.8M140.1 632.2V637.0M142.9 626.8V633.7M157.1 652.0V654.2M162.7 656.6V664.5M165.6 650.6V659.1M171.2 654.4V660.3M174.1 654.2V655.4M176.9 643.2V655.7M188.2 652.3V656.0M191.1 651.8V655.7M202.4 656.1V657.8M208.1 654.2V675.1M210.9 644.4V654.2M213.8 640.7V646.9M219.4 630.9V651.0M222.3 620.2V634.9M233.6 624.5V640.0M236.4 625.0V628.5M244.9 638.0V645.4M247.8 628.0V641.0M250.6 582.0V631.0M256.3 561.2V591.6M261.9 575.5V582.3M264.8 573.0V577.5M267.6 571.0V573.0M270.4 540.3V571.0M284.6 560.7V570.3M287.4 546.2V562.7M290.3 539.2V547.7M301.6 550.1V559.0M310.1 584.4V601.3M312.9 582.7V586.9M324.3 621.3V635.8M327.1 611.3V622.8M329.9 610.8V613.8M332.8 605.2V611.3M335.6 598.0V606.7M341.3 599.7V603.4M344.1 590.0V602.8M346.9 586.9V593.0M349.8 575.4V586.9M358.3 573.4V579.3M361.1 565.8V573.4M366.8 557.7V569.5" stroke="#3f6b24" stroke-width="1" fill="none"/>
<path d="M1.2 581.0V591.5M4.0 588.0V596.5M9.7 592.0V601.8M21.0 591.8V595.5M26.7 591.5V596.4M38.0 567.5V574.0M46.5 548.5V559.7M57.9 455.5V480.9M60.7 480.4V504.9M66.4 497.5V531.8M69.2 531.3V535.2M74.9 509.7V542.7M77.7 542.7V607.7M86.2 548.0V600.0M89.1 599.0V603.0M91.9 598.7V615.0M103.2 572.2V592.8M106.1 591.8V593.5M108.9 593.5V602.8M114.6 595.4V603.7M117.4 601.7V610.0M123.1 601.6V612.4M125.9 609.9V626.0M128.7 623.5V633.0M131.6 632.0V642.0M145.7 622.4V632.0M148.6 632.0V641.0M151.4 640.0V649.5M154.2 645.5V655.7M159.9 652.0V668.9M168.4 650.1V660.8M179.7 640.7V644.4M182.6 644.4V655.1M185.4 653.1V655.1M193.9 650.8V654.5M196.7 652.8V655.0M199.6 653.9V659.2M205.2 656.7V680.0M216.6 641.7V650.0M225.1 613.8V656.7M227.9 626.0V632.3M230.8 632.3V639.5M239.3 622.5V634.4M242.1 632.9V645.4M253.4 582.0V590.6M259.1 573.2V583.3M273.3 542.8V554.4M276.1 552.9V564.6M278.9 563.6V568.5M281.8 568.5V574.7M293.1 546.0V556.3M295.9 555.3V557.9M298.8 554.3V560.5M304.4 551.1V596.7M307.3 595.2V600.3M315.8 582.7V600.3M318.6 600.3V631.0M321.4 622.3V632.2M338.4 598.5V602.8M352.6 573.4V578.0M355.4 577.0V579.3M364.0 565.8V571.0" stroke="#a82a22" stroke-width="1" fill="none"/>
<path d="M5.7 592.0h2.3V594.0h-2.3zM11.4 599.0h2.3V600.3h-2.3zM14.2 596.5h2.3V599.0h-2.3zM17.1 591.8h2.3V596.5h-2.3zM22.7 592.0h2.3V594.0h-2.3zM28.4 590.5h2.3V595.4h-2.3zM31.2 589.3h2.3V590.5h-2.3zM34.1 568.5h2.3V589.3h-2.3zM39.7 567.3h2.3V574.0h-2.3zM42.6 549.0h2.3V567.3h-2.3zM48.2 525.7h2.3V558.7h-2.3zM51.1 495.0h2.3V525.7h-2.3zM53.9 457.0h2.3V495.0h-2.3zM62.4 503.8h2.3V505.1h-2.3zM70.9 512.2h2.3V534.2h-2.3zM79.4 561.3h2.3V573.4h-2.3zM82.2 549.0h2.3V561.3h-2.3zM93.6 599.0h2.3V602.0h-2.3zM96.4 586.9h2.3V599.0h-2.3zM99.2 572.2h2.3V586.9h-2.3zM110.6 594.8h2.3V596.0h-2.3zM119.1 601.6h2.3V610.0h-2.3zM133.2 637.5h2.3V639.5h-2.3zM136.1 636.6h2.3V637.8h-2.3zM138.9 632.2h2.3V637.0h-2.3zM141.8 627.3h2.3V632.2h-2.3zM155.9 652.0h2.3V654.2h-2.3zM161.6 657.6h2.3V664.0h-2.3zM164.4 650.6h2.3V657.6h-2.3zM170.1 655.4h2.3V660.3h-2.3zM172.9 654.2h2.3V655.4h-2.3zM175.8 643.2h2.3V654.2h-2.3zM187.1 653.8h2.3V655.0h-2.3zM189.9 651.8h2.3V654.2h-2.3zM201.3 656.1h2.3V657.3h-2.3zM206.9 654.2h2.3V672.6h-2.3zM209.8 644.4h2.3V654.2h-2.3zM212.6 643.2h2.3V644.4h-2.3zM218.3 633.4h2.3V650.0h-2.3zM221.1 621.2h2.3V633.4h-2.3zM232.4 626.0h2.3V639.5h-2.3zM235.3 625.0h2.3V626.0h-2.3zM243.8 639.5h2.3V644.4h-2.3zM246.6 628.5h2.3V639.5h-2.3zM249.4 582.0h2.3V628.5h-2.3zM255.1 574.7h2.3V590.6h-2.3zM260.8 577.0h2.3V580.8h-2.3zM263.6 573.0h2.3V577.0h-2.3zM266.4 571.0h2.3V573.0h-2.3zM269.3 542.8h2.3V571.0h-2.3zM283.5 561.2h2.3V569.8h-2.3zM286.3 547.7h2.3V561.2h-2.3zM289.1 546.5h2.3V547.7h-2.3zM300.5 552.6h2.3V557.5h-2.3zM309.0 584.4h2.3V600.3h-2.3zM311.8 583.2h2.3V584.4h-2.3zM323.1 622.3h2.3V626.0h-2.3zM326.0 613.8h2.3V622.3h-2.3zM328.8 611.3h2.3V613.8h-2.3zM331.6 605.2h2.3V611.3h-2.3zM334.5 599.0h2.3V605.2h-2.3zM340.1 599.7h2.3V600.9h-2.3zM343.0 592.5h2.3V600.3h-2.3zM345.8 586.9h2.3V592.5h-2.3zM348.6 575.9h2.3V586.9h-2.3zM357.1 573.4h2.3V578.3h-2.3zM360.0 567.3h2.3V573.4h-2.3zM365.6 558.7h2.3V568.5h-2.3z" fill="#6a9a3a" stroke="#3f6b24" stroke-width="0.7"/>
<path d="M0.1 582.0h2.3V590.5h-2.3zM2.9 590.5h2.3V594.0h-2.3zM8.6 592.0h2.3V600.3h-2.3zM19.9 591.8h2.3V594.0h-2.3zM25.6 592.0h2.3V595.4h-2.3zM36.9 568.5h2.3V574.0h-2.3zM45.4 549.0h2.3V558.7h-2.3zM56.7 457.0h2.3V480.4h-2.3zM59.6 480.4h2.3V504.9h-2.3zM65.2 504.0h2.3V531.8h-2.3zM68.1 531.8h2.3V534.2h-2.3zM73.7 512.2h2.3V542.7h-2.3zM76.6 542.7h2.3V573.4h-2.3zM85.1 549.0h2.3V599.0h-2.3zM87.9 599.0h2.3V601.5h-2.3zM90.7 601.2h2.3V602.4h-2.3zM102.1 572.2h2.3V591.8h-2.3zM104.9 591.8h2.3V593.5h-2.3zM107.7 593.5h2.3V595.4h-2.3zM113.4 595.4h2.3V602.7h-2.3zM116.2 602.7h2.3V610.0h-2.3zM121.9 601.6h2.3V611.4h-2.3zM124.7 611.4h2.3V626.0h-2.3zM127.6 626.0h2.3V633.0h-2.3zM130.4 633.0h2.3V639.5h-2.3zM144.6 627.3h2.3V632.0h-2.3zM147.4 632.0h2.3V641.0h-2.3zM150.3 641.0h2.3V648.0h-2.3zM153.1 648.0h2.3V654.2h-2.3zM158.8 652.0h2.3V664.0h-2.3zM167.3 650.6h2.3V660.3h-2.3zM178.6 643.2h2.3V644.4h-2.3zM181.4 644.4h2.3V653.6h-2.3zM184.3 653.6h2.3V654.6h-2.3zM192.8 651.8h2.3V653.0h-2.3zM195.6 652.8h2.3V654.0h-2.3zM198.4 653.9h2.3V656.7h-2.3zM204.1 656.7h2.3V672.6h-2.3zM215.4 643.2h2.3V650.0h-2.3zM223.9 621.2h2.3V626.0h-2.3zM226.8 626.0h2.3V632.3h-2.3zM229.6 632.3h2.3V639.5h-2.3zM238.1 625.0h2.3V633.4h-2.3zM240.9 633.4h2.3V644.4h-2.3zM252.3 582.0h2.3V590.6h-2.3zM257.9 574.7h2.3V580.8h-2.3zM272.1 542.8h2.3V553.9h-2.3zM274.9 553.9h2.3V563.6h-2.3zM277.8 563.6h2.3V568.5h-2.3zM280.6 568.5h2.3V569.8h-2.3zM292.0 546.5h2.3V556.3h-2.3zM294.8 556.3h2.3V557.4h-2.3zM297.6 556.8h2.3V558.0h-2.3zM303.3 552.6h2.3V596.7h-2.3zM306.1 596.7h2.3V600.3h-2.3zM314.6 583.2h2.3V600.3h-2.3zM317.5 600.3h2.3V624.8h-2.3zM320.3 624.8h2.3V626.0h-2.3zM337.3 599.0h2.3V600.3h-2.3zM351.5 575.9h2.3V577.0h-2.3zM354.3 577.0h2.3V578.3h-2.3zM362.8 567.3h2.3V568.5h-2.3z" fill="#e8453c" stroke="#a82a22" stroke-width="0.7"/>
<polyline points="0.0,584.0 0.9,584.1 2.8,584.3 5.5,584.6 9.2,585.1 13.0,585.4 17.0,585.6 21.1,585.7 25.4,585.7 29.7,585.5 34.0,585.2 38.2,584.8 42.6,584.1 46.7,583.4 50.7,582.6 54.5,581.6 58.1,580.6 61.8,579.7 65.4,578.9 69.1,578.2 72.8,577.8 76.8,577.4 81.1,577.1 85.7,577.0 90.6,577.0 95.4,577.1 100.0,577.2 104.4,577.5 108.6,577.8 112.9,578.3 117.2,578.8 121.4,579.5 125.8,580.3 129.7,581.0 133.4,581.7 136.8,582.2 139.9,582.8 142.7,583.3 145.1,584.0 147.2,584.8 149.1,585.6 151.5,586.4 154.6,587.2 158.2,587.8 162.6,588.5 167.3,589.2 172.5,590.1 178.1,591.2 184.3,592.4 190.4,593.5 196.5,594.6 202.6,595.6 208.7,596.6 214.5,597.5 220.0,598.3 225.3,599.1 230.1,599.8 235.0,600.4 240.0,600.8 244.9,601.2 249.8,601.3 254.7,601.2 259.6,600.9 264.4,600.2 269.3,599.3 274.2,598.5 279.1,597.8 284.1,597.1 288.9,596.4 293.8,596.0 298.5,595.8 303.1,595.8 307.7,595.9 312.6,596.1 317.9,596.4 323.6,596.6 329.8,596.9 336.1,597.0 342.6,596.9 349.4,596.6 356.5,596.1 361.7,595.8 365.2,595.5 367.0,595.4" fill="none" stroke="#6f8fae" stroke-width="2.4" stroke-linejoin="round" stroke-linecap="round" />
<polyline points="0.0,587.0 0.8,587.4 2.2,588.3 4.5,589.6 7.5,591.4 10.5,592.7 13.6,593.5 16.7,593.8 19.8,593.7 22.6,593.5 25.1,593.2 27.2,592.9 29.1,592.4 30.9,591.7 32.7,590.5 34.6,589.0 36.4,587.2 38.2,585.1 39.9,582.8 41.5,580.3 43.0,577.5 44.5,574.3 46.1,570.6 47.6,566.5 49.1,561.9 50.7,557.7 52.4,553.9 54.2,550.4 56.0,547.4 57.9,544.8 59.7,542.8 61.5,541.4 63.3,540.4 65.1,539.6 66.9,538.8 68.8,538.1 70.6,537.6 72.3,537.3 73.9,537.3 75.2,537.6 76.5,538.1 77.8,539.1 79.4,540.5 81.1,542.3 82.9,544.4 84.8,546.8 86.6,549.2 88.4,551.8 90.3,554.6 92.2,557.2 94.4,559.6 96.7,561.9 99.1,564.1 101.6,566.1 104.0,567.9 106.5,569.6 108.9,571.1 111.4,572.9 113.8,575.1 116.3,577.5 118.7,580.3 121.0,582.8 123.2,585.1 125.2,587.2 127.0,589.0 129.3,591.6 132.1,595.0 135.3,599.1 139.0,604.0 142.7,608.7 146.3,613.2 150.0,617.4 153.7,621.3 157.5,625.1 161.5,628.6 165.6,631.9 169.9,634.9 174.2,637.5 178.4,639.7 182.7,641.3 187.0,642.6 191.0,643.8 194.6,645.0 198.0,646.2 201.1,647.5 204.2,648.3 207.2,648.7 210.3,648.8 213.3,648.5 216.2,647.9 219.0,647.2 221.6,646.2 224.0,645.0 226.8,643.9 229.8,642.8 233.2,641.8 236.9,640.9 240.1,639.6 242.9,637.9 245.1,635.8 247.0,633.4 248.9,630.6 251.1,627.6 253.4,624.2 255.8,620.5 258.3,616.7 260.7,612.7 263.2,608.6 265.6,604.4 268.1,600.4 270.5,596.8 273.0,593.4 275.4,590.3 278.0,587.3 280.8,584.4 283.7,581.6 286.8,578.8 289.6,576.6 292.2,574.9 294.6,573.8 296.8,573.1 299.0,573.1 301.3,573.5 303.6,574.5 306.0,576.0 308.3,577.5 310.4,579.1 312.3,580.6 314.2,582.1 316.0,583.9 317.8,585.9 319.7,588.1 321.5,590.5 323.5,592.6 325.7,594.3 327.9,595.6 330.4,596.5 332.8,597.1 335.2,597.4 337.7,597.4 340.1,597.1 342.6,596.5 345.0,595.8 347.5,594.8 349.9,593.6 352.6,592.2 355.5,590.5 358.6,588.6 362.0,586.4 364.5,584.8 366.2,583.7 367.0,583.2" fill="none" stroke="#9b8468" stroke-width="2.4" stroke-linejoin="round" stroke-linecap="round" />
<polyline points="44.0,600.3 47.7,599.0 50.2,589.3 52.6,557.5 55.0,549.0 58.8,548.2 73.0,548.2" fill="none" stroke="#52d823" stroke-width="2.3" stroke-linejoin="round" stroke-linecap="round" />
<polyline points="222.8,678.2 247.3,677.5 251.0,673.8 254.1,655.4 257.1,642.0 262.0,639.5 266.9,624.8 271.8,607.7 288.9,607.0 291.4,595.5 301.1,594.2" fill="none" stroke="#52d823" stroke-width="2.3" stroke-linejoin="round" stroke-linecap="round" />
<polyline points="365.9,594.2 365.9,601.5" fill="none" stroke="#52d823" stroke-width="2.3" stroke-linejoin="round" stroke-linecap="round" />
<polyline points="0.0,555.0 22.0,555.0 25.7,557.5 39.2,557.5" fill="none" stroke="#dd2040" stroke-width="2.3" stroke-linejoin="round" stroke-linecap="round" />
<polyline points="76.6,446.0 78.3,464.5 80.8,470.6 85.7,470.6 88.0,486.5 93.0,503.0 105.3,503.2 109.0,524.5 111.4,525.7 120.0,552.6 127.3,556.3 133.4,575.9 146.9,580.8 151.8,586.9 156.7,602.8 161.6,612.0 178.8,612.0 186.1,615.0 191.0,620.0 195.9,622.4 200.8,629.7 204.5,637.8 217.9,638.3" fill="none" stroke="#dd2040" stroke-width="2.3" stroke-linejoin="round" stroke-linecap="round" />
<polyline points="303.1,530.6 306.0,541.6 313.4,544.0 318.3,552.6 323.0,558.7 338.9,559.5 345.0,561.7 363.4,562.4" fill="none" stroke="#dd2040" stroke-width="2.3" stroke-linejoin="round" stroke-linecap="round" />
<line x1="1" y1="149.5" x2="367" y2="149.5" stroke="#111" stroke-width="2.2" stroke-dasharray="2.2 2.2"/>
<line x1="1" y1="358.5" x2="367" y2="358.5" stroke="#111" stroke-width="2.2" stroke-dasharray="2.2 2.2"/>
<line x1="1" y1="568.5" x2="367" y2="568.5" stroke="#111" stroke-width="2.2" stroke-dasharray="2.2 2.2"/>
<line x1="1" y1="231.5" x2="367" y2="231.5" stroke="#111" stroke-width="2.2" />
<line x1="1" y1="485.5" x2="367" y2="485.5" stroke="#111" stroke-width="2.2" />
<line x1="1" y1="651" x2="367" y2="651" stroke="#111" stroke-width="2.2" />
<line x1="1" y1="290" x2="367" y2="290" stroke="#2fe41b" stroke-width="3" stroke-dasharray="12.5 6.3"/>
<text x="6" y="228" font-size="12.3" fill="#111" font-weight="bold" text-anchor="start" >10.960,73 (R1)</text>
<text x="6" y="482" font-size="12.3" fill="#111" font-weight="bold" text-anchor="start" >10.564,67 (PP)</text>
<text x="6" y="647.5" font-size="12.3" fill="#111" font-weight="bold" text-anchor="start" >10.305,23 (S1)</text>
</g>
<rect x="4" y="83" width="288" height="33" fill="#ffffff" opacity="0.62"/>
<rect x="4" y="116" width="124" height="15" fill="#ffffff" opacity="0.62"/>
<rect x="4" y="131" width="91" height="17" fill="#ffffff" opacity="0.62"/>
<rect x="4" y="148" width="127" height="15" fill="#ffffff" opacity="0.62"/>
<rect x="4" y="163" width="121" height="16" fill="#ffffff" opacity="0.62"/>
<rect x="4" y="179" width="110" height="16" fill="#ffffff" opacity="0.62"/>
<rect x="4" y="195" width="303" height="16" fill="#ffffff" opacity="0.62"/>
<g stroke="#e05555" fill="none" stroke-width="0.9"><path d="M8.5 85.5v2.500m0 4.500v3.500M12.5 85.5v4.500m0 4v2M16.5 85.5v1.500m0 4.500v5"/><rect x="7.3" y="88" width="2.400" height="4.500" rx="0.8"/><rect x="11.3" y="90" width="2.400" height="4" rx="0.8"/><rect x="15.3" y="87" width="2.400" height="4.500" rx="0.8"/></g>
<text x="24" y="95.5" font-size="10.7" fill="#e05555" font-weight="normal" text-anchor="start" >DAX (JFD Bank, Bid)</text>
<text x="24" y="111.5" font-size="10.7" fill="#e05555" font-weight="normal" text-anchor="start" >O: 10.474,00</text>
<text x="91.5" y="111.5" font-size="10.7" fill="#e05555" font-weight="normal" text-anchor="start" >H: 10.477,50</text>
<text x="159" y="111.5" font-size="10.7" fill="#e05555" font-weight="normal" text-anchor="start" >L: 10.445,70</text>
<text x="225" y="111.5" font-size="10.7" fill="#e05555" font-weight="normal" text-anchor="start" >C: 10.470,20</text>
<rect x="10" y="122.0" width="7" height="3" fill="#2fe41b" />
<text x="24" y="127.5" font-size="10.7" fill="#35e01f" font-weight="normal" text-anchor="start" >ST(10, 3)</text>
<text x="76" y="127.5" font-size="10.7" fill="#35e01f" font-weight="normal" text-anchor="start" >10.396,44</text>
<circle cx="13.5" cy="139.5" r="4" fill="none" stroke="#333" stroke-width="1.1"/><circle cx="13.5" cy="139.5" r="1.8" fill="#333"/>
<text x="24" y="143.5" font-size="10.7" fill="#333" font-weight="normal" text-anchor="start" >Marker: 1 Tag</text>
<rect x="10" y="154.0" width="7" height="3" fill="#3c9fc4" />
<text x="24" y="159.5" font-size="10.7" fill="#3c95bd" font-weight="normal" text-anchor="start" >EMA(200)</text>
<text x="79" y="159.5" font-size="10.7" fill="#3c95bd" font-weight="normal" text-anchor="start" >10.394,60</text>
<rect x="10" y="170.0" width="7" height="3" fill="#7d957a" />
<text x="24" y="175.5" font-size="10.7" fill="#78907a" font-weight="normal" text-anchor="start" >EMA(20)</text>
<text x="72.5" y="175.5" font-size="10.7" fill="#78907a" font-weight="normal" text-anchor="start" >10.421,46</text>
<rect x="9" y="182" width="10" height="10" fill="#000" />
<text x="24" y="191.5" font-size="10.7" fill="#111" font-weight="normal" text-anchor="start" >PP(W)</text>
<text x="60.5" y="191.5" font-size="10.7" fill="#111" font-weight="normal" text-anchor="start" >10.564,67</text>
<circle cx="13.5" cy="203.5" r="4.6" fill="none" stroke="#333" stroke-width="1.1"/><path d="M13.5 200.5V203.5H16.0" fill="none" stroke="#333" stroke-width="1.1"/>
<text x="24" y="207.5" font-size="10.7" fill="#333" font-weight="normal" text-anchor="start" >23.04.2020 11:45 - 24.04.2020 21:15</text>
<text x="210.5" y="207.5" font-size="10.7" fill="#333" font-weight="normal" text-anchor="start" >(1 Tag, 15 Minuten)</text>
<path d="M367.5 290L375 280.5H438V299.5H375Z" fill="#2fe41b"/>
<text x="378.5" y="294.3" font-size="12.2" fill="#111" font-weight="normal" text-anchor="start" >10.869,24</text>
<path d="M367.5 546L375 536.5H438V555.5H375Z" fill="#f25c5c"/>
<text x="378.5" y="550.3" font-size="12.2" fill="#111" font-weight="normal" text-anchor="start" >10.470,20</text>
<path d="M367.5 534.3L375 524.8H438V543.8H375Z" fill="#5dbb3a"/>
<text x="378.5" y="538.5999999999999" font-size="12.2" fill="#111" font-weight="normal" text-anchor="start" >10.488,70</text>
<path d="M367.5 680.5L375 671.0H438V690.0H375Z" fill="#f25c5c"/>
<text x="378.5" y="684.8" font-size="12.2" fill="#111" font-weight="normal" text-anchor="start" >10.260,20</text>
<rect x="0" y="685" width="48" height="14" fill="#2a2a2d" />
<circle cx="8" cy="692" r="1.800" fill="#2f4a66"/>
<circle cx="19" cy="692" r="1.800" fill="#2f5c48"/>
<circle cx="30" cy="692" r="1.800" fill="#5c3a3a"/>
<circle cx="41" cy="692" r="1.800" fill="#5a4a3a"/>
</svg></body></html>
